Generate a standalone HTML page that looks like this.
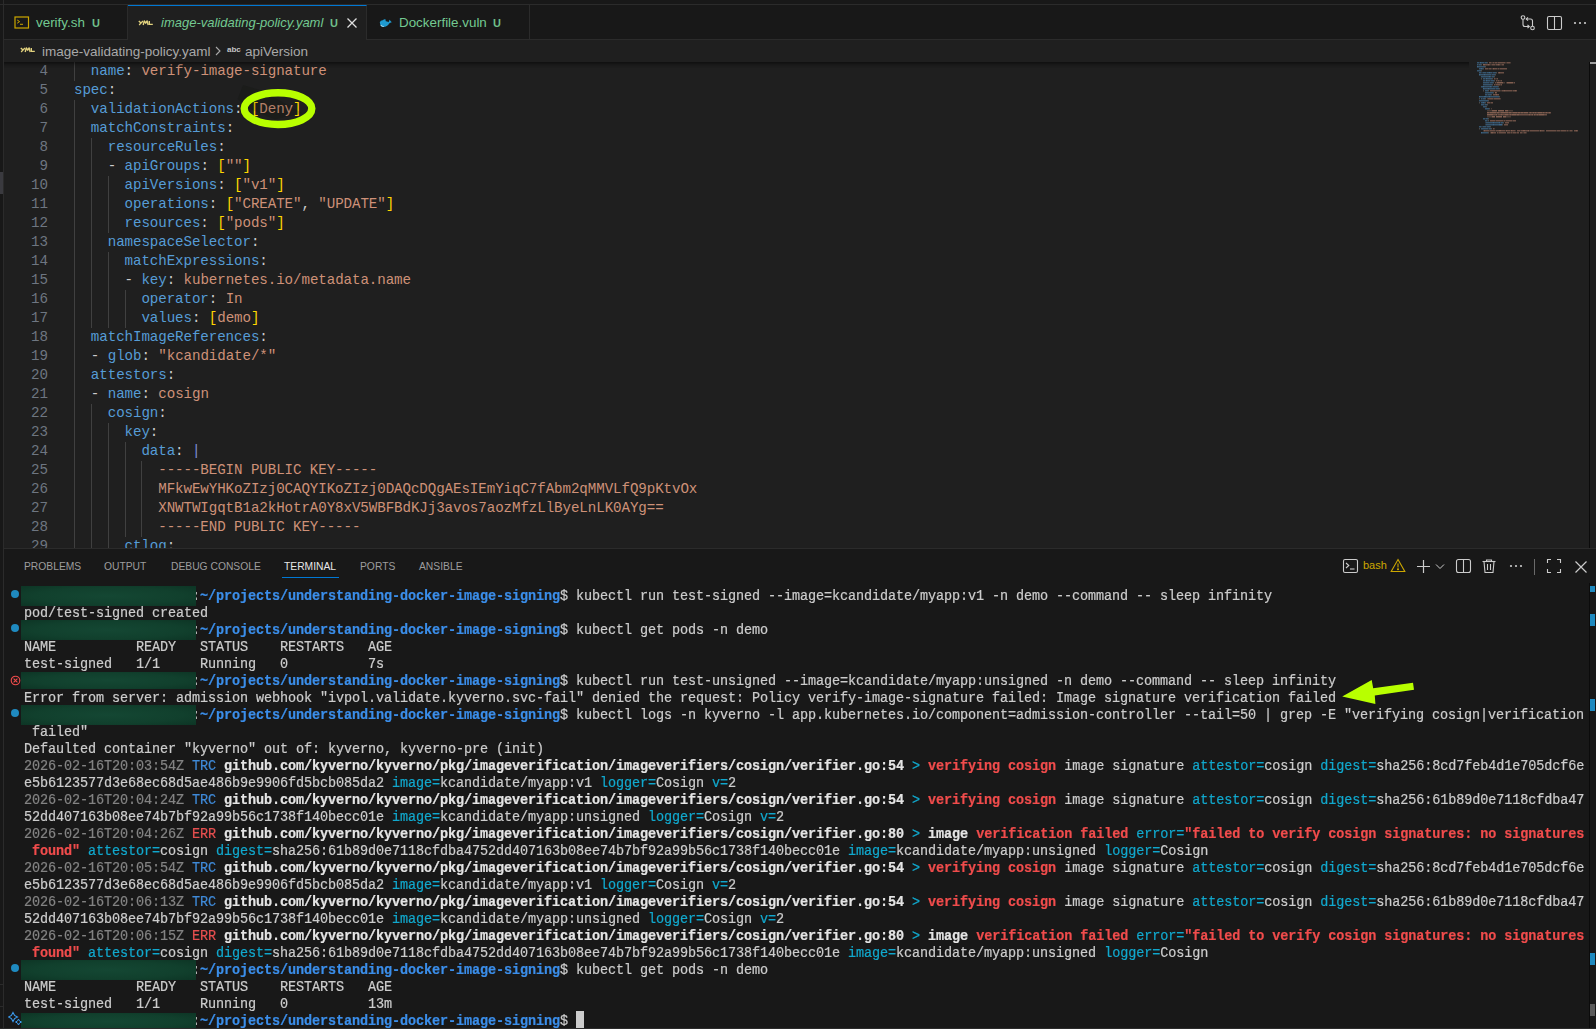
<!DOCTYPE html>
<html><head><meta charset="utf-8">
<style>
*{margin:0;padding:0;box-sizing:border-box}
html,body{width:1596px;height:1029px;overflow:hidden;background:#181818}
body{position:relative;font-family:"Liberation Sans",sans-serif}
.abs{position:absolute}
/* chrome */
#leftstrip{position:absolute;left:0;top:0;width:3px;height:1029px;background:#181818}
#leftborder{position:absolute;left:3px;top:0;width:1px;height:1029px;background:#2b2b2b}
#topline{position:absolute;left:0;top:4px;width:1596px;height:1px;background:#2b2b2b}
#tabbar{position:absolute;left:4px;top:5px;width:1592px;height:35px;background:#181818}
.tab{position:absolute;top:5px;height:35px;background:#181818;border-right:1px solid #2b2b2b;border-bottom:1px solid #2b2b2b}
.tab.active{background:#1f1f1f;border-bottom:none;border-top:1px solid #0078d4}
.tabfill{position:absolute;top:39px;height:1px;background:#2b2b2b}
.ub{font-size:11px!important;font-weight:bold;color:#6fbf8a!important;line-height:36px!important}
.tlabel{position:absolute;top:0;line-height:35px;font-size:13.4px;color:#73c991;white-space:pre}
#bread{position:absolute;left:4px;top:40px;width:1592px;height:22px;background:#1f1f1f}
.btxt{position:absolute;top:41px;line-height:22px;font-size:13.5px;color:#a9a9a9;white-space:pre}
#editor{position:absolute;left:4px;top:62px;width:1592px;height:486px;background:#1f1f1f;overflow:hidden}
#shadow{position:absolute;left:4px;top:62px;width:1465px;height:6px;box-shadow:#000 0 6px 6px -6px inset}
.ln{position:absolute;left:4px;width:44px;text-align:right;height:19px;line-height:19px;font-family:"Liberation Mono",monospace;font-size:14.2px;letter-spacing:0px;color:#6e7681;white-space:pre}
.cl{position:absolute;left:74px;height:19px;line-height:19px;font-family:"Liberation Mono",monospace;font-size:14.2px;letter-spacing:-0.0914px;color:#cccccc;white-space:pre}
.ig{position:absolute;width:1px;background:#404040}
.k{color:#569cd6}.s{color:#ce9178}.p{color:#cccccc}.b{color:#ffd700}.m{color:#7f8fd8}
#ovborder{position:absolute;left:1589px;top:62px;width:1px;height:486px;background:#0b0b0b}
#ovcursor{position:absolute;left:1590px;top:62px;width:6px;height:2px;background:#a0a0a0}
#edgebottom{position:absolute;left:4px;top:548px;width:1592px;height:1px;background:#2b2b2b}
#panel{position:absolute;left:4px;top:549px;width:1592px;height:480px;background:#181818}
.ptab{position:absolute;top:560px;line-height:14px;font-size:10.3px;color:#9d9d9d;white-space:pre}
.ptab.act{color:#e7e7e7}
#ptabline{position:absolute;left:282px;top:577px;width:57px;height:1px;background:#0078d4}
.tl{position:absolute;left:24px;height:17px;line-height:17px;transform:scaleY(1.11);transform-origin:0 3px;-webkit-text-stroke:0.2px currentColor;font-family:"Liberation Mono",monospace;font-size:13.5px;letter-spacing:-0.1013px;color:#cccccc;white-space:pre}
.w{color:#cccccc}.pb{color:#3b8eea;font-weight:bold}.g{color:#838383}.tb{color:#3f8ad8}.tr{color:#e64f4f}
.bw{color:#e5e5e5;font-weight:bold}.c{color:#11a8cd}.br{color:#f14c4c;font-weight:bold}
.cur{background:#cccccc}
.gbox{position:absolute;left:21px;width:175px;height:20px;background:radial-gradient(ellipse at 50% 50%,#144733 0%,#11402d 60%,#0d3525 100%);filter:blur(0.7px)}
.dot{position:absolute;left:11px;width:8px;height:8px;border-radius:50%;background:#1f8ac0}
.tmark{position:absolute;left:1590px;width:5px;background:#1f8ac0}
#tborder{position:absolute;left:1589px;top:583px;width:1px;height:446px;background:#0b0b0b}
svg.ic{position:absolute}
</style></head><body>
<div id="leftstrip"></div>
<div class="abs" style="left:0;top:172px;width:3px;height:22px;background:#3a3a3f"></div>
<div class="abs" style="left:0;top:984px;width:3px;height:1px;background:#2b2b2b"></div>
<div class="abs" style="left:0;top:1006px;width:3px;height:1px;background:#2b2b2b"></div>
<div id="leftborder"></div>
<div id="topline"></div>
<div id="tabbar"></div>
<div class="tab" style="left:4px;width:124px"></div>
<div class="tab active" style="left:128px;width:239px"></div>
<div class="tab" style="left:367px;width:163px"></div>
<div class="tabfill" style="left:530px;width:1066px"></div>
<!-- tab 1 icon: terminal -->
<svg class="ic" style="left:14px;top:16px" width="16" height="14" viewBox="0 0 16 14"><rect x="1" y="1" width="13.5" height="11" fill="none" stroke="#cca700" stroke-width="1.2"/><path d="M3.2 4 L5.6 5.6 L3.2 7.2" fill="none" stroke="#cca700" stroke-width="1"/><path d="M6 8.3 H9" stroke="#cca700" stroke-width="1"/></svg>
<div class="tlabel" style="left:36px;top:5px">verify.sh</div><div class="tlabel ub" style="left:92px;top:5px">U</div>
<!-- tab 2 icon: yaml -->
<svg class="ic" style="left:138px;top:20px" width="16" height="6" viewBox="0 0 16 6" fill="none" stroke="#e2d27e" stroke-width="1.4" stroke-linejoin="round"><path d="M0.8 0.9 L3 2.9 L5 0.9 M3 2.9 L1.2 5"/><path d="M5.2 5 L6.3 0.9 L7.7 3.2 L9.1 0.9 L10.2 5"/><path d="M11.3 0.9 V4.4 H14.8"/></svg>
<div class="tlabel" style="left:161px;top:5px;font-size:13px"><i>image-validating-policy.yaml</i></div><div class="tlabel ub" style="left:330px;top:5px">U</div>
<svg class="ic" style="left:346px;top:17px" width="12" height="12" viewBox="0 0 12 12"><path d="M1.5 1.5 L10.5 10.5 M10.5 1.5 L1.5 10.5" stroke="#e0e0e0" stroke-width="1.3"/></svg>
<!-- tab 3 icon: docker -->
<svg class="ic" style="left:379px;top:18px" width="14" height="10" viewBox="0 0 14 10"><path d="M0.8 4.2 C1.5 3 2.5 2.2 3.8 2.3 C4.5 1.5 5.5 1.2 6.3 1 L6.8 3.3 C7.8 3.4 8.6 3.8 9.6 4.3 C10 3.2 10.2 2.3 10.6 1.8 C11.3 2.5 11.8 3.3 12.8 4.2 C11.6 4.6 10.8 5 10.2 5.6 C9 7.8 6.8 9 4.5 9 C2.3 9 1 7.3 0.8 4.2 Z" fill="#1f9ad0"/><path d="M1.8 7 C2.6 8.2 3.6 8.6 4.8 8.5" stroke="#a8d8ee" stroke-width="1.2" fill="none"/></svg>
<div class="tlabel" style="left:399px;top:5px">Dockerfile.vuln</div><div class="tlabel ub" style="left:493px;top:5px">U</div>
<!-- top-right icons -->
<svg class="ic" style="left:1519px;top:14px" width="18" height="18" viewBox="0 0 18 18" fill="none" stroke="#cccccc" stroke-width="1.1"><circle cx="4" cy="3.5" r="1.8"/><circle cx="13.5" cy="14" r="1.8"/><path d="M4 5.3 V10.5 Q4 12.5 6 12.5 H10"/><path d="M8.5 10.8 L10.3 12.5 L8.5 14.2"/><path d="M13.5 12.2 V7 Q13.5 5 11.5 5 H7.5"/><path d="M9 3.3 L7.2 5 L9 6.7"/></svg>
<svg class="ic" style="left:1546px;top:15px" width="17" height="16" viewBox="0 0 17 16" fill="none" stroke="#cccccc" stroke-width="1.1"><rect x="1.5" y="1.5" width="14" height="13" rx="1.5"/><path d="M8.5 1.5 V14.5"/></svg>
<svg class="ic" style="left:1573px;top:21px" width="14" height="4" viewBox="0 0 14 4" fill="#cccccc"><circle cx="2" cy="2" r="1.1"/><circle cx="7" cy="2" r="1.1"/><circle cx="12" cy="2" r="1.1"/></svg>
<!-- breadcrumbs -->
<div id="bread"></div>
<svg class="ic" style="left:20px;top:47px" width="16" height="6" viewBox="0 0 16 6" fill="none" stroke="#e2d27e" stroke-width="1.4" stroke-linejoin="round"><path d="M0.8 0.9 L3 2.9 L5 0.9 M3 2.9 L1.2 5"/><path d="M5.2 5 L6.3 0.9 L7.7 3.2 L9.1 0.9 L10.2 5"/><path d="M11.3 0.9 V4.4 H14.8"/></svg>
<div class="btxt" style="left:42px">image-validating-policy.yaml</div>
<svg class="ic" style="left:213px;top:45px" width="10" height="12" viewBox="0 0 10 12"><path d="M3 2 L7 6 L3 10" fill="none" stroke="#a9a9a9" stroke-width="1.1"/></svg>
<div class="btxt" style="left:227px;font-size:8px;top:39px;font-weight:bold;color:#c5c5c5">abc</div>
<div class="btxt" style="left:245px">apiVersion</div>
<!-- editor -->
<div id="editor"></div>
<div class="ln" style="top:62px">4</div>
<div class="cl" style="top:62px">  <span class="k">name</span><span class="p">: </span><span class="s">verify-image-signature</span></div>
<div class="ln" style="top:81px">5</div>
<div class="cl" style="top:81px"><span class="k">spec</span><span class="p">:</span></div>
<div class="ln" style="top:100px">6</div>
<div class="cl" style="top:100px">  <span class="k">validationActions</span><span class="p">: </span><span class="b">[</span><span class="s">Deny</span><span class="b">]</span></div>
<div class="ln" style="top:119px">7</div>
<div class="cl" style="top:119px">  <span class="k">matchConstraints</span><span class="p">:</span></div>
<div class="ln" style="top:138px">8</div>
<div class="cl" style="top:138px">    <span class="k">resourceRules</span><span class="p">:</span></div>
<div class="ln" style="top:157px">9</div>
<div class="cl" style="top:157px">    <span class="p">- </span><span class="k">apiGroups</span><span class="p">: </span><span class="b">[</span><span class="s">""</span><span class="b">]</span></div>
<div class="ln" style="top:176px">10</div>
<div class="cl" style="top:176px">      <span class="k">apiVersions</span><span class="p">: </span><span class="b">[</span><span class="s">"v1"</span><span class="b">]</span></div>
<div class="ln" style="top:195px">11</div>
<div class="cl" style="top:195px">      <span class="k">operations</span><span class="p">: </span><span class="b">[</span><span class="s">"CREATE"</span><span class="p">, </span><span class="s">"UPDATE"</span><span class="b">]</span></div>
<div class="ln" style="top:214px">12</div>
<div class="cl" style="top:214px">      <span class="k">resources</span><span class="p">: </span><span class="b">[</span><span class="s">"pods"</span><span class="b">]</span></div>
<div class="ln" style="top:233px">13</div>
<div class="cl" style="top:233px">    <span class="k">namespaceSelector</span><span class="p">:</span></div>
<div class="ln" style="top:252px">14</div>
<div class="cl" style="top:252px">      <span class="k">matchExpressions</span><span class="p">:</span></div>
<div class="ln" style="top:271px">15</div>
<div class="cl" style="top:271px">      <span class="p">- </span><span class="k">key</span><span class="p">: </span><span class="s">kubernetes.io/metadata.name</span></div>
<div class="ln" style="top:290px">16</div>
<div class="cl" style="top:290px">        <span class="k">operator</span><span class="p">: </span><span class="s">In</span></div>
<div class="ln" style="top:309px">17</div>
<div class="cl" style="top:309px">        <span class="k">values</span><span class="p">: </span><span class="b">[</span><span class="s">demo</span><span class="b">]</span></div>
<div class="ln" style="top:328px">18</div>
<div class="cl" style="top:328px">  <span class="k">matchImageReferences</span><span class="p">:</span></div>
<div class="ln" style="top:347px">19</div>
<div class="cl" style="top:347px">  <span class="p">- </span><span class="k">glob</span><span class="p">: </span><span class="s">"kcandidate/*"</span></div>
<div class="ln" style="top:366px">20</div>
<div class="cl" style="top:366px">  <span class="k">attestors</span><span class="p">:</span></div>
<div class="ln" style="top:385px">21</div>
<div class="cl" style="top:385px">  <span class="p">- </span><span class="k">name</span><span class="p">: </span><span class="s">cosign</span></div>
<div class="ln" style="top:404px">22</div>
<div class="cl" style="top:404px">    <span class="k">cosign</span><span class="p">:</span></div>
<div class="ln" style="top:423px">23</div>
<div class="cl" style="top:423px">      <span class="k">key</span><span class="p">:</span></div>
<div class="ln" style="top:442px">24</div>
<div class="cl" style="top:442px">        <span class="k">data</span><span class="p">: </span><span class="m">|</span></div>
<div class="ln" style="top:461px">25</div>
<div class="cl" style="top:461px">          <span class="s">-----BEGIN PUBLIC KEY-----</span></div>
<div class="ln" style="top:480px">26</div>
<div class="cl" style="top:480px">          <span class="s">MFkwEwYHKoZIzj0CAQYIKoZIzj0DAQcDQgAEsIEmYiqC7fAbm2qMMVLfQ9pKtvOx</span></div>
<div class="ln" style="top:499px">27</div>
<div class="cl" style="top:499px">          <span class="s">XNWTWIgqtB1a2kHotrA0Y8xV5WBFBdKJj3avos7aozMfzLlByeLnLK0AYg==</span></div>
<div class="ln" style="top:518px">28</div>
<div class="cl" style="top:518px">          <span class="s">-----END PUBLIC KEY-----</span></div>
<div class="ln" style="top:537px">29</div>
<div class="cl" style="top:537px">      <span class="k">ctlog</span><span class="p">:</span></div>
<div class="ig" style="left:74px;top:62px;height:19px"></div>
<div class="ig" style="left:74px;top:100px;height:448px"></div>
<div class="ig" style="left:91px;top:138px;height:190px"></div>
<div class="ig" style="left:91px;top:404px;height:144px"></div>
<div class="ig" style="left:108px;top:176px;height:57px"></div>
<div class="ig" style="left:108px;top:252px;height:76px"></div>
<div class="ig" style="left:108px;top:423px;height:125px"></div>
<div class="ig" style="left:125px;top:290px;height:38px"></div>
<div class="ig" style="left:125px;top:442px;height:95px"></div>
<div class="ig" style="left:141px;top:461px;height:76px"></div>
<div id="shadow"></div>
<svg class="mm" width="1596" height="200" style="position:absolute;left:0;top:0" opacity="0.9"><rect x="1477" y="62" width="1" height="1.5" fill="#569cd6" fill-opacity="0.48"/><rect x="1478" y="62" width="1" height="1.5" fill="#569cd6" fill-opacity="0.48"/><rect x="1479" y="62" width="1" height="1.5" fill="#569cd6" fill-opacity="0.28"/><rect x="1480" y="62" width="1" height="1.5" fill="#569cd6" fill-opacity="0.62"/><rect x="1481" y="62" width="1" height="1.5" fill="#569cd6" fill-opacity="0.48"/><rect x="1482" y="62" width="1" height="1.5" fill="#569cd6" fill-opacity="0.48"/><rect x="1483" y="62" width="1" height="1.5" fill="#569cd6" fill-opacity="0.48"/><rect x="1484" y="62" width="1" height="1.5" fill="#569cd6" fill-opacity="0.28"/><rect x="1485" y="62" width="1" height="1.5" fill="#569cd6" fill-opacity="0.48"/><rect x="1486" y="62" width="1" height="1.5" fill="#569cd6" fill-opacity="0.48"/><rect x="1487" y="62" width="1" height="1.5" fill="#cccccc" fill-opacity="0.28"/><rect x="1489" y="62" width="1" height="1.5" fill="#ce9178" fill-opacity="0.48"/><rect x="1490" y="62" width="1" height="1.5" fill="#ce9178" fill-opacity="0.48"/><rect x="1491" y="62" width="1" height="1.5" fill="#ce9178" fill-opacity="0.28"/><rect x="1492" y="62" width="1" height="1.5" fill="#ce9178" fill-opacity="0.28"/><rect x="1493" y="62" width="1" height="1.5" fill="#ce9178" fill-opacity="0.48"/><rect x="1494" y="62" width="1" height="1.5" fill="#ce9178" fill-opacity="0.28"/><rect x="1495" y="62" width="1" height="1.5" fill="#ce9178" fill-opacity="0.48"/><rect x="1496" y="62" width="1" height="1.5" fill="#ce9178" fill-opacity="0.48"/><rect x="1497" y="62" width="1" height="1.5" fill="#ce9178" fill-opacity="0.28"/><rect x="1498" y="62" width="1" height="1.5" fill="#ce9178" fill-opacity="0.48"/><rect x="1499" y="62" width="1" height="1.5" fill="#ce9178" fill-opacity="0.48"/><rect x="1500" y="62" width="1" height="1.5" fill="#ce9178" fill-opacity="0.48"/><rect x="1501" y="62" width="1" height="1.5" fill="#ce9178" fill-opacity="0.48"/><rect x="1502" y="62" width="1" height="1.5" fill="#ce9178" fill-opacity="0.48"/><rect x="1503" y="62" width="1" height="1.5" fill="#ce9178" fill-opacity="0.48"/><rect x="1504" y="62" width="1" height="1.5" fill="#ce9178" fill-opacity="0.48"/><rect x="1505" y="62" width="1" height="1.5" fill="#ce9178" fill-opacity="0.28"/><rect x="1506" y="62" width="1" height="1.5" fill="#ce9178" fill-opacity="0.28"/><rect x="1507" y="62" width="1" height="1.5" fill="#ce9178" fill-opacity="0.48"/><rect x="1508" y="62" width="1" height="1.5" fill="#ce9178" fill-opacity="0.48"/><rect x="1509" y="62" width="1" height="1.5" fill="#ce9178" fill-opacity="0.48"/><rect x="1510" y="62" width="1" height="1.5" fill="#ce9178" fill-opacity="0.28"/><rect x="1477" y="64" width="1" height="1.5" fill="#569cd6" fill-opacity="0.48"/><rect x="1478" y="64" width="1" height="1.5" fill="#569cd6" fill-opacity="0.28"/><rect x="1479" y="64" width="1" height="1.5" fill="#569cd6" fill-opacity="0.48"/><rect x="1480" y="64" width="1" height="1.5" fill="#569cd6" fill-opacity="0.48"/><rect x="1481" y="64" width="1" height="1.5" fill="#cccccc" fill-opacity="0.28"/><rect x="1483" y="64" width="1" height="1.5" fill="#ce9178" fill-opacity="0.62"/><rect x="1484" y="64" width="1" height="1.5" fill="#ce9178" fill-opacity="0.62"/><rect x="1485" y="64" width="1" height="1.5" fill="#ce9178" fill-opacity="0.48"/><rect x="1486" y="64" width="1" height="1.5" fill="#ce9178" fill-opacity="0.48"/><rect x="1487" y="64" width="1" height="1.5" fill="#ce9178" fill-opacity="0.48"/><rect x="1488" y="64" width="1" height="1.5" fill="#ce9178" fill-opacity="0.62"/><rect x="1489" y="64" width="1" height="1.5" fill="#ce9178" fill-opacity="0.48"/><rect x="1490" y="64" width="1" height="1.5" fill="#ce9178" fill-opacity="0.28"/><rect x="1491" y="64" width="1" height="1.5" fill="#ce9178" fill-opacity="0.28"/><rect x="1492" y="64" width="1" height="1.5" fill="#ce9178" fill-opacity="0.48"/><rect x="1493" y="64" width="1" height="1.5" fill="#ce9178" fill-opacity="0.48"/><rect x="1494" y="64" width="1" height="1.5" fill="#ce9178" fill-opacity="0.48"/><rect x="1495" y="64" width="1" height="1.5" fill="#ce9178" fill-opacity="0.28"/><rect x="1496" y="64" width="1" height="1.5" fill="#ce9178" fill-opacity="0.48"/><rect x="1497" y="64" width="1" height="1.5" fill="#ce9178" fill-opacity="0.48"/><rect x="1498" y="64" width="1" height="1.5" fill="#ce9178" fill-opacity="0.62"/><rect x="1499" y="64" width="1" height="1.5" fill="#ce9178" fill-opacity="0.48"/><rect x="1500" y="64" width="1" height="1.5" fill="#ce9178" fill-opacity="0.28"/><rect x="1501" y="64" width="1" height="1.5" fill="#ce9178" fill-opacity="0.28"/><rect x="1502" y="64" width="1" height="1.5" fill="#ce9178" fill-opacity="0.48"/><rect x="1503" y="64" width="1" height="1.5" fill="#ce9178" fill-opacity="0.48"/><rect x="1477" y="66" width="1" height="1.5" fill="#569cd6" fill-opacity="0.62"/><rect x="1478" y="66" width="1" height="1.5" fill="#569cd6" fill-opacity="0.48"/><rect x="1479" y="66" width="1" height="1.5" fill="#569cd6" fill-opacity="0.48"/><rect x="1480" y="66" width="1" height="1.5" fill="#569cd6" fill-opacity="0.48"/><rect x="1481" y="66" width="1" height="1.5" fill="#569cd6" fill-opacity="0.48"/><rect x="1482" y="66" width="1" height="1.5" fill="#569cd6" fill-opacity="0.48"/><rect x="1483" y="66" width="1" height="1.5" fill="#569cd6" fill-opacity="0.48"/><rect x="1484" y="66" width="1" height="1.5" fill="#569cd6" fill-opacity="0.48"/><rect x="1485" y="66" width="1" height="1.5" fill="#cccccc" fill-opacity="0.28"/><rect x="1479" y="68" width="1" height="1.5" fill="#569cd6" fill-opacity="0.48"/><rect x="1480" y="68" width="1" height="1.5" fill="#569cd6" fill-opacity="0.48"/><rect x="1481" y="68" width="1" height="1.5" fill="#569cd6" fill-opacity="0.62"/><rect x="1482" y="68" width="1" height="1.5" fill="#569cd6" fill-opacity="0.48"/><rect x="1483" y="68" width="1" height="1.5" fill="#cccccc" fill-opacity="0.28"/><rect x="1485" y="68" width="1" height="1.5" fill="#ce9178" fill-opacity="0.48"/><rect x="1486" y="68" width="1" height="1.5" fill="#ce9178" fill-opacity="0.48"/><rect x="1487" y="68" width="1" height="1.5" fill="#ce9178" fill-opacity="0.48"/><rect x="1488" y="68" width="1" height="1.5" fill="#ce9178" fill-opacity="0.28"/><rect x="1489" y="68" width="1" height="1.5" fill="#ce9178" fill-opacity="0.48"/><rect x="1490" y="68" width="1" height="1.5" fill="#ce9178" fill-opacity="0.48"/><rect x="1491" y="68" width="1" height="1.5" fill="#ce9178" fill-opacity="0.28"/><rect x="1492" y="68" width="1" height="1.5" fill="#ce9178" fill-opacity="0.28"/><rect x="1493" y="68" width="1" height="1.5" fill="#ce9178" fill-opacity="0.62"/><rect x="1494" y="68" width="1" height="1.5" fill="#ce9178" fill-opacity="0.48"/><rect x="1495" y="68" width="1" height="1.5" fill="#ce9178" fill-opacity="0.48"/><rect x="1496" y="68" width="1" height="1.5" fill="#ce9178" fill-opacity="0.48"/><rect x="1497" y="68" width="1" height="1.5" fill="#ce9178" fill-opacity="0.28"/><rect x="1498" y="68" width="1" height="1.5" fill="#ce9178" fill-opacity="0.48"/><rect x="1499" y="68" width="1" height="1.5" fill="#ce9178" fill-opacity="0.28"/><rect x="1500" y="68" width="1" height="1.5" fill="#ce9178" fill-opacity="0.48"/><rect x="1501" y="68" width="1" height="1.5" fill="#ce9178" fill-opacity="0.48"/><rect x="1502" y="68" width="1" height="1.5" fill="#ce9178" fill-opacity="0.48"/><rect x="1503" y="68" width="1" height="1.5" fill="#ce9178" fill-opacity="0.48"/><rect x="1504" y="68" width="1" height="1.5" fill="#ce9178" fill-opacity="0.48"/><rect x="1505" y="68" width="1" height="1.5" fill="#ce9178" fill-opacity="0.48"/><rect x="1506" y="68" width="1" height="1.5" fill="#ce9178" fill-opacity="0.48"/><rect x="1477" y="70" width="1" height="1.5" fill="#569cd6" fill-opacity="0.48"/><rect x="1478" y="70" width="1" height="1.5" fill="#569cd6" fill-opacity="0.48"/><rect x="1479" y="70" width="1" height="1.5" fill="#569cd6" fill-opacity="0.48"/><rect x="1480" y="70" width="1" height="1.5" fill="#569cd6" fill-opacity="0.48"/><rect x="1481" y="70" width="1" height="1.5" fill="#cccccc" fill-opacity="0.28"/><rect x="1479" y="72" width="1" height="1.5" fill="#569cd6" fill-opacity="0.48"/><rect x="1480" y="72" width="1" height="1.5" fill="#569cd6" fill-opacity="0.48"/><rect x="1481" y="72" width="1" height="1.5" fill="#569cd6" fill-opacity="0.28"/><rect x="1482" y="72" width="1" height="1.5" fill="#569cd6" fill-opacity="0.28"/><rect x="1483" y="72" width="1" height="1.5" fill="#569cd6" fill-opacity="0.48"/><rect x="1484" y="72" width="1" height="1.5" fill="#569cd6" fill-opacity="0.48"/><rect x="1485" y="72" width="1" height="1.5" fill="#569cd6" fill-opacity="0.48"/><rect x="1486" y="72" width="1" height="1.5" fill="#569cd6" fill-opacity="0.28"/><rect x="1487" y="72" width="1" height="1.5" fill="#569cd6" fill-opacity="0.48"/><rect x="1488" y="72" width="1" height="1.5" fill="#569cd6" fill-opacity="0.48"/><rect x="1489" y="72" width="1" height="1.5" fill="#569cd6" fill-opacity="0.62"/><rect x="1490" y="72" width="1" height="1.5" fill="#569cd6" fill-opacity="0.48"/><rect x="1491" y="72" width="1" height="1.5" fill="#569cd6" fill-opacity="0.48"/><rect x="1492" y="72" width="1" height="1.5" fill="#569cd6" fill-opacity="0.28"/><rect x="1493" y="72" width="1" height="1.5" fill="#569cd6" fill-opacity="0.48"/><rect x="1494" y="72" width="1" height="1.5" fill="#569cd6" fill-opacity="0.48"/><rect x="1495" y="72" width="1" height="1.5" fill="#569cd6" fill-opacity="0.48"/><rect x="1496" y="72" width="1" height="1.5" fill="#cccccc" fill-opacity="0.28"/><rect x="1498" y="72" width="1" height="1.5" fill="#ce9178" fill-opacity="0.48"/><rect x="1499" y="72" width="1" height="1.5" fill="#ce9178" fill-opacity="0.62"/><rect x="1500" y="72" width="1" height="1.5" fill="#ce9178" fill-opacity="0.48"/><rect x="1501" y="72" width="1" height="1.5" fill="#ce9178" fill-opacity="0.48"/><rect x="1502" y="72" width="1" height="1.5" fill="#ce9178" fill-opacity="0.48"/><rect x="1503" y="72" width="1" height="1.5" fill="#ce9178" fill-opacity="0.48"/><rect x="1479" y="74" width="1" height="1.5" fill="#569cd6" fill-opacity="0.62"/><rect x="1480" y="74" width="1" height="1.5" fill="#569cd6" fill-opacity="0.48"/><rect x="1481" y="74" width="1" height="1.5" fill="#569cd6" fill-opacity="0.48"/><rect x="1482" y="74" width="1" height="1.5" fill="#569cd6" fill-opacity="0.48"/><rect x="1483" y="74" width="1" height="1.5" fill="#569cd6" fill-opacity="0.48"/><rect x="1484" y="74" width="1" height="1.5" fill="#569cd6" fill-opacity="0.62"/><rect x="1485" y="74" width="1" height="1.5" fill="#569cd6" fill-opacity="0.48"/><rect x="1486" y="74" width="1" height="1.5" fill="#569cd6" fill-opacity="0.48"/><rect x="1487" y="74" width="1" height="1.5" fill="#569cd6" fill-opacity="0.48"/><rect x="1488" y="74" width="1" height="1.5" fill="#569cd6" fill-opacity="0.48"/><rect x="1489" y="74" width="1" height="1.5" fill="#569cd6" fill-opacity="0.48"/><rect x="1490" y="74" width="1" height="1.5" fill="#569cd6" fill-opacity="0.48"/><rect x="1491" y="74" width="1" height="1.5" fill="#569cd6" fill-opacity="0.28"/><rect x="1492" y="74" width="1" height="1.5" fill="#569cd6" fill-opacity="0.48"/><rect x="1493" y="74" width="1" height="1.5" fill="#569cd6" fill-opacity="0.48"/><rect x="1494" y="74" width="1" height="1.5" fill="#569cd6" fill-opacity="0.48"/><rect x="1495" y="74" width="1" height="1.5" fill="#cccccc" fill-opacity="0.28"/><rect x="1481" y="76" width="1" height="1.5" fill="#569cd6" fill-opacity="0.48"/><rect x="1482" y="76" width="1" height="1.5" fill="#569cd6" fill-opacity="0.48"/><rect x="1483" y="76" width="1" height="1.5" fill="#569cd6" fill-opacity="0.48"/><rect x="1484" y="76" width="1" height="1.5" fill="#569cd6" fill-opacity="0.48"/><rect x="1485" y="76" width="1" height="1.5" fill="#569cd6" fill-opacity="0.48"/><rect x="1486" y="76" width="1" height="1.5" fill="#569cd6" fill-opacity="0.48"/><rect x="1487" y="76" width="1" height="1.5" fill="#569cd6" fill-opacity="0.48"/><rect x="1488" y="76" width="1" height="1.5" fill="#569cd6" fill-opacity="0.48"/><rect x="1489" y="76" width="1" height="1.5" fill="#569cd6" fill-opacity="0.62"/><rect x="1490" y="76" width="1" height="1.5" fill="#569cd6" fill-opacity="0.48"/><rect x="1491" y="76" width="1" height="1.5" fill="#569cd6" fill-opacity="0.28"/><rect x="1492" y="76" width="1" height="1.5" fill="#569cd6" fill-opacity="0.48"/><rect x="1493" y="76" width="1" height="1.5" fill="#569cd6" fill-opacity="0.48"/><rect x="1494" y="76" width="1" height="1.5" fill="#cccccc" fill-opacity="0.28"/><rect x="1481" y="78" width="1" height="1.5" fill="#cccccc" fill-opacity="0.28"/><rect x="1483" y="78" width="1" height="1.5" fill="#569cd6" fill-opacity="0.48"/><rect x="1484" y="78" width="1" height="1.5" fill="#569cd6" fill-opacity="0.48"/><rect x="1485" y="78" width="1" height="1.5" fill="#569cd6" fill-opacity="0.28"/><rect x="1486" y="78" width="1" height="1.5" fill="#569cd6" fill-opacity="0.62"/><rect x="1487" y="78" width="1" height="1.5" fill="#569cd6" fill-opacity="0.48"/><rect x="1488" y="78" width="1" height="1.5" fill="#569cd6" fill-opacity="0.48"/><rect x="1489" y="78" width="1" height="1.5" fill="#569cd6" fill-opacity="0.48"/><rect x="1490" y="78" width="1" height="1.5" fill="#569cd6" fill-opacity="0.48"/><rect x="1491" y="78" width="1" height="1.5" fill="#569cd6" fill-opacity="0.48"/><rect x="1492" y="78" width="1" height="1.5" fill="#cccccc" fill-opacity="0.28"/><rect x="1494" y="78" width="1" height="1.5" fill="#ce9178" fill-opacity="0.48"/><rect x="1495" y="78" width="1" height="1.5" fill="#ce9178" fill-opacity="0.28"/><rect x="1496" y="78" width="1" height="1.5" fill="#ce9178" fill-opacity="0.28"/><rect x="1497" y="78" width="1" height="1.5" fill="#ce9178" fill-opacity="0.48"/><rect x="1483" y="80" width="1" height="1.5" fill="#569cd6" fill-opacity="0.48"/><rect x="1484" y="80" width="1" height="1.5" fill="#569cd6" fill-opacity="0.48"/><rect x="1485" y="80" width="1" height="1.5" fill="#569cd6" fill-opacity="0.28"/><rect x="1486" y="80" width="1" height="1.5" fill="#569cd6" fill-opacity="0.62"/><rect x="1487" y="80" width="1" height="1.5" fill="#569cd6" fill-opacity="0.48"/><rect x="1488" y="80" width="1" height="1.5" fill="#569cd6" fill-opacity="0.48"/><rect x="1489" y="80" width="1" height="1.5" fill="#569cd6" fill-opacity="0.48"/><rect x="1490" y="80" width="1" height="1.5" fill="#569cd6" fill-opacity="0.28"/><rect x="1491" y="80" width="1" height="1.5" fill="#569cd6" fill-opacity="0.48"/><rect x="1492" y="80" width="1" height="1.5" fill="#569cd6" fill-opacity="0.48"/><rect x="1493" y="80" width="1" height="1.5" fill="#569cd6" fill-opacity="0.48"/><rect x="1494" y="80" width="1" height="1.5" fill="#cccccc" fill-opacity="0.28"/><rect x="1496" y="80" width="1" height="1.5" fill="#ce9178" fill-opacity="0.48"/><rect x="1497" y="80" width="1" height="1.5" fill="#ce9178" fill-opacity="0.28"/><rect x="1498" y="80" width="1" height="1.5" fill="#ce9178" fill-opacity="0.48"/><rect x="1499" y="80" width="1" height="1.5" fill="#ce9178" fill-opacity="0.28"/><rect x="1500" y="80" width="1" height="1.5" fill="#ce9178" fill-opacity="0.28"/><rect x="1501" y="80" width="1" height="1.5" fill="#ce9178" fill-opacity="0.48"/><rect x="1483" y="82" width="1" height="1.5" fill="#569cd6" fill-opacity="0.48"/><rect x="1484" y="82" width="1" height="1.5" fill="#569cd6" fill-opacity="0.48"/><rect x="1485" y="82" width="1" height="1.5" fill="#569cd6" fill-opacity="0.48"/><rect x="1486" y="82" width="1" height="1.5" fill="#569cd6" fill-opacity="0.48"/><rect x="1487" y="82" width="1" height="1.5" fill="#569cd6" fill-opacity="0.48"/><rect x="1488" y="82" width="1" height="1.5" fill="#569cd6" fill-opacity="0.48"/><rect x="1489" y="82" width="1" height="1.5" fill="#569cd6" fill-opacity="0.28"/><rect x="1490" y="82" width="1" height="1.5" fill="#569cd6" fill-opacity="0.48"/><rect x="1491" y="82" width="1" height="1.5" fill="#569cd6" fill-opacity="0.48"/><rect x="1492" y="82" width="1" height="1.5" fill="#569cd6" fill-opacity="0.48"/><rect x="1493" y="82" width="1" height="1.5" fill="#cccccc" fill-opacity="0.28"/><rect x="1495" y="82" width="1" height="1.5" fill="#ce9178" fill-opacity="0.48"/><rect x="1496" y="82" width="1" height="1.5" fill="#ce9178" fill-opacity="0.28"/><rect x="1497" y="82" width="1" height="1.5" fill="#ce9178" fill-opacity="0.62"/><rect x="1498" y="82" width="1" height="1.5" fill="#ce9178" fill-opacity="0.62"/><rect x="1499" y="82" width="1" height="1.5" fill="#ce9178" fill-opacity="0.62"/><rect x="1500" y="82" width="1" height="1.5" fill="#ce9178" fill-opacity="0.62"/><rect x="1501" y="82" width="1" height="1.5" fill="#ce9178" fill-opacity="0.62"/><rect x="1502" y="82" width="1" height="1.5" fill="#ce9178" fill-opacity="0.62"/><rect x="1503" y="82" width="1" height="1.5" fill="#ce9178" fill-opacity="0.28"/><rect x="1504" y="82" width="1" height="1.5" fill="#ce9178" fill-opacity="0.28"/><rect x="1506" y="82" width="1" height="1.5" fill="#ce9178" fill-opacity="0.28"/><rect x="1507" y="82" width="1" height="1.5" fill="#ce9178" fill-opacity="0.62"/><rect x="1508" y="82" width="1" height="1.5" fill="#ce9178" fill-opacity="0.62"/><rect x="1509" y="82" width="1" height="1.5" fill="#ce9178" fill-opacity="0.62"/><rect x="1510" y="82" width="1" height="1.5" fill="#ce9178" fill-opacity="0.62"/><rect x="1511" y="82" width="1" height="1.5" fill="#ce9178" fill-opacity="0.62"/><rect x="1512" y="82" width="1" height="1.5" fill="#ce9178" fill-opacity="0.62"/><rect x="1513" y="82" width="1" height="1.5" fill="#ce9178" fill-opacity="0.28"/><rect x="1514" y="82" width="1" height="1.5" fill="#ce9178" fill-opacity="0.48"/><rect x="1483" y="84" width="1" height="1.5" fill="#569cd6" fill-opacity="0.48"/><rect x="1484" y="84" width="1" height="1.5" fill="#569cd6" fill-opacity="0.48"/><rect x="1485" y="84" width="1" height="1.5" fill="#569cd6" fill-opacity="0.48"/><rect x="1486" y="84" width="1" height="1.5" fill="#569cd6" fill-opacity="0.48"/><rect x="1487" y="84" width="1" height="1.5" fill="#569cd6" fill-opacity="0.48"/><rect x="1488" y="84" width="1" height="1.5" fill="#569cd6" fill-opacity="0.48"/><rect x="1489" y="84" width="1" height="1.5" fill="#569cd6" fill-opacity="0.48"/><rect x="1490" y="84" width="1" height="1.5" fill="#569cd6" fill-opacity="0.48"/><rect x="1491" y="84" width="1" height="1.5" fill="#569cd6" fill-opacity="0.48"/><rect x="1492" y="84" width="1" height="1.5" fill="#cccccc" fill-opacity="0.28"/><rect x="1494" y="84" width="1" height="1.5" fill="#ce9178" fill-opacity="0.48"/><rect x="1495" y="84" width="1" height="1.5" fill="#ce9178" fill-opacity="0.28"/><rect x="1496" y="84" width="1" height="1.5" fill="#ce9178" fill-opacity="0.48"/><rect x="1497" y="84" width="1" height="1.5" fill="#ce9178" fill-opacity="0.48"/><rect x="1498" y="84" width="1" height="1.5" fill="#ce9178" fill-opacity="0.48"/><rect x="1499" y="84" width="1" height="1.5" fill="#ce9178" fill-opacity="0.48"/><rect x="1500" y="84" width="1" height="1.5" fill="#ce9178" fill-opacity="0.28"/><rect x="1501" y="84" width="1" height="1.5" fill="#ce9178" fill-opacity="0.48"/><rect x="1481" y="86" width="1" height="1.5" fill="#569cd6" fill-opacity="0.48"/><rect x="1482" y="86" width="1" height="1.5" fill="#569cd6" fill-opacity="0.48"/><rect x="1483" y="86" width="1" height="1.5" fill="#569cd6" fill-opacity="0.62"/><rect x="1484" y="86" width="1" height="1.5" fill="#569cd6" fill-opacity="0.48"/><rect x="1485" y="86" width="1" height="1.5" fill="#569cd6" fill-opacity="0.48"/><rect x="1486" y="86" width="1" height="1.5" fill="#569cd6" fill-opacity="0.48"/><rect x="1487" y="86" width="1" height="1.5" fill="#569cd6" fill-opacity="0.48"/><rect x="1488" y="86" width="1" height="1.5" fill="#569cd6" fill-opacity="0.48"/><rect x="1489" y="86" width="1" height="1.5" fill="#569cd6" fill-opacity="0.48"/><rect x="1490" y="86" width="1" height="1.5" fill="#569cd6" fill-opacity="0.62"/><rect x="1491" y="86" width="1" height="1.5" fill="#569cd6" fill-opacity="0.48"/><rect x="1492" y="86" width="1" height="1.5" fill="#569cd6" fill-opacity="0.28"/><rect x="1493" y="86" width="1" height="1.5" fill="#569cd6" fill-opacity="0.48"/><rect x="1494" y="86" width="1" height="1.5" fill="#569cd6" fill-opacity="0.48"/><rect x="1495" y="86" width="1" height="1.5" fill="#569cd6" fill-opacity="0.48"/><rect x="1496" y="86" width="1" height="1.5" fill="#569cd6" fill-opacity="0.48"/><rect x="1497" y="86" width="1" height="1.5" fill="#569cd6" fill-opacity="0.48"/><rect x="1498" y="86" width="1" height="1.5" fill="#cccccc" fill-opacity="0.28"/><rect x="1483" y="88" width="1" height="1.5" fill="#569cd6" fill-opacity="0.62"/><rect x="1484" y="88" width="1" height="1.5" fill="#569cd6" fill-opacity="0.48"/><rect x="1485" y="88" width="1" height="1.5" fill="#569cd6" fill-opacity="0.48"/><rect x="1486" y="88" width="1" height="1.5" fill="#569cd6" fill-opacity="0.48"/><rect x="1487" y="88" width="1" height="1.5" fill="#569cd6" fill-opacity="0.48"/><rect x="1488" y="88" width="1" height="1.5" fill="#569cd6" fill-opacity="0.62"/><rect x="1489" y="88" width="1" height="1.5" fill="#569cd6" fill-opacity="0.48"/><rect x="1490" y="88" width="1" height="1.5" fill="#569cd6" fill-opacity="0.48"/><rect x="1491" y="88" width="1" height="1.5" fill="#569cd6" fill-opacity="0.48"/><rect x="1492" y="88" width="1" height="1.5" fill="#569cd6" fill-opacity="0.48"/><rect x="1493" y="88" width="1" height="1.5" fill="#569cd6" fill-opacity="0.48"/><rect x="1494" y="88" width="1" height="1.5" fill="#569cd6" fill-opacity="0.48"/><rect x="1495" y="88" width="1" height="1.5" fill="#569cd6" fill-opacity="0.28"/><rect x="1496" y="88" width="1" height="1.5" fill="#569cd6" fill-opacity="0.48"/><rect x="1497" y="88" width="1" height="1.5" fill="#569cd6" fill-opacity="0.48"/><rect x="1498" y="88" width="1" height="1.5" fill="#569cd6" fill-opacity="0.48"/><rect x="1499" y="88" width="1" height="1.5" fill="#cccccc" fill-opacity="0.28"/><rect x="1483" y="90" width="1" height="1.5" fill="#cccccc" fill-opacity="0.28"/><rect x="1485" y="90" width="1" height="1.5" fill="#569cd6" fill-opacity="0.48"/><rect x="1486" y="90" width="1" height="1.5" fill="#569cd6" fill-opacity="0.48"/><rect x="1487" y="90" width="1" height="1.5" fill="#569cd6" fill-opacity="0.48"/><rect x="1488" y="90" width="1" height="1.5" fill="#cccccc" fill-opacity="0.28"/><rect x="1490" y="90" width="1" height="1.5" fill="#ce9178" fill-opacity="0.48"/><rect x="1491" y="90" width="1" height="1.5" fill="#ce9178" fill-opacity="0.48"/><rect x="1492" y="90" width="1" height="1.5" fill="#ce9178" fill-opacity="0.48"/><rect x="1493" y="90" width="1" height="1.5" fill="#ce9178" fill-opacity="0.48"/><rect x="1494" y="90" width="1" height="1.5" fill="#ce9178" fill-opacity="0.48"/><rect x="1495" y="90" width="1" height="1.5" fill="#ce9178" fill-opacity="0.48"/><rect x="1496" y="90" width="1" height="1.5" fill="#ce9178" fill-opacity="0.48"/><rect x="1497" y="90" width="1" height="1.5" fill="#ce9178" fill-opacity="0.48"/><rect x="1498" y="90" width="1" height="1.5" fill="#ce9178" fill-opacity="0.48"/><rect x="1499" y="90" width="1" height="1.5" fill="#ce9178" fill-opacity="0.48"/><rect x="1500" y="90" width="1" height="1.5" fill="#ce9178" fill-opacity="0.28"/><rect x="1501" y="90" width="1" height="1.5" fill="#ce9178" fill-opacity="0.28"/><rect x="1502" y="90" width="1" height="1.5" fill="#ce9178" fill-opacity="0.48"/><rect x="1503" y="90" width="1" height="1.5" fill="#ce9178" fill-opacity="0.48"/><rect x="1504" y="90" width="1" height="1.5" fill="#ce9178" fill-opacity="0.62"/><rect x="1505" y="90" width="1" height="1.5" fill="#ce9178" fill-opacity="0.48"/><rect x="1506" y="90" width="1" height="1.5" fill="#ce9178" fill-opacity="0.48"/><rect x="1507" y="90" width="1" height="1.5" fill="#ce9178" fill-opacity="0.48"/><rect x="1508" y="90" width="1" height="1.5" fill="#ce9178" fill-opacity="0.48"/><rect x="1509" y="90" width="1" height="1.5" fill="#ce9178" fill-opacity="0.48"/><rect x="1510" y="90" width="1" height="1.5" fill="#ce9178" fill-opacity="0.48"/><rect x="1511" y="90" width="1" height="1.5" fill="#ce9178" fill-opacity="0.48"/><rect x="1512" y="90" width="1" height="1.5" fill="#ce9178" fill-opacity="0.28"/><rect x="1513" y="90" width="1" height="1.5" fill="#ce9178" fill-opacity="0.48"/><rect x="1514" y="90" width="1" height="1.5" fill="#ce9178" fill-opacity="0.48"/><rect x="1515" y="90" width="1" height="1.5" fill="#ce9178" fill-opacity="0.62"/><rect x="1516" y="90" width="1" height="1.5" fill="#ce9178" fill-opacity="0.48"/><rect x="1485" y="92" width="1" height="1.5" fill="#569cd6" fill-opacity="0.48"/><rect x="1486" y="92" width="1" height="1.5" fill="#569cd6" fill-opacity="0.48"/><rect x="1487" y="92" width="1" height="1.5" fill="#569cd6" fill-opacity="0.48"/><rect x="1488" y="92" width="1" height="1.5" fill="#569cd6" fill-opacity="0.48"/><rect x="1489" y="92" width="1" height="1.5" fill="#569cd6" fill-opacity="0.48"/><rect x="1490" y="92" width="1" height="1.5" fill="#569cd6" fill-opacity="0.48"/><rect x="1491" y="92" width="1" height="1.5" fill="#569cd6" fill-opacity="0.48"/><rect x="1492" y="92" width="1" height="1.5" fill="#569cd6" fill-opacity="0.48"/><rect x="1493" y="92" width="1" height="1.5" fill="#cccccc" fill-opacity="0.28"/><rect x="1495" y="92" width="1" height="1.5" fill="#ce9178" fill-opacity="0.62"/><rect x="1496" y="92" width="1" height="1.5" fill="#ce9178" fill-opacity="0.48"/><rect x="1485" y="94" width="1" height="1.5" fill="#569cd6" fill-opacity="0.48"/><rect x="1486" y="94" width="1" height="1.5" fill="#569cd6" fill-opacity="0.48"/><rect x="1487" y="94" width="1" height="1.5" fill="#569cd6" fill-opacity="0.28"/><rect x="1488" y="94" width="1" height="1.5" fill="#569cd6" fill-opacity="0.48"/><rect x="1489" y="94" width="1" height="1.5" fill="#569cd6" fill-opacity="0.48"/><rect x="1490" y="94" width="1" height="1.5" fill="#569cd6" fill-opacity="0.48"/><rect x="1491" y="94" width="1" height="1.5" fill="#cccccc" fill-opacity="0.28"/><rect x="1493" y="94" width="1" height="1.5" fill="#ce9178" fill-opacity="0.48"/><rect x="1494" y="94" width="1" height="1.5" fill="#ce9178" fill-opacity="0.48"/><rect x="1495" y="94" width="1" height="1.5" fill="#ce9178" fill-opacity="0.48"/><rect x="1496" y="94" width="1" height="1.5" fill="#ce9178" fill-opacity="0.62"/><rect x="1497" y="94" width="1" height="1.5" fill="#ce9178" fill-opacity="0.48"/><rect x="1498" y="94" width="1" height="1.5" fill="#ce9178" fill-opacity="0.48"/><rect x="1479" y="96" width="1" height="1.5" fill="#569cd6" fill-opacity="0.62"/><rect x="1480" y="96" width="1" height="1.5" fill="#569cd6" fill-opacity="0.48"/><rect x="1481" y="96" width="1" height="1.5" fill="#569cd6" fill-opacity="0.48"/><rect x="1482" y="96" width="1" height="1.5" fill="#569cd6" fill-opacity="0.48"/><rect x="1483" y="96" width="1" height="1.5" fill="#569cd6" fill-opacity="0.48"/><rect x="1484" y="96" width="1" height="1.5" fill="#569cd6" fill-opacity="0.62"/><rect x="1485" y="96" width="1" height="1.5" fill="#569cd6" fill-opacity="0.62"/><rect x="1486" y="96" width="1" height="1.5" fill="#569cd6" fill-opacity="0.48"/><rect x="1487" y="96" width="1" height="1.5" fill="#569cd6" fill-opacity="0.48"/><rect x="1488" y="96" width="1" height="1.5" fill="#569cd6" fill-opacity="0.48"/><rect x="1489" y="96" width="1" height="1.5" fill="#569cd6" fill-opacity="0.62"/><rect x="1490" y="96" width="1" height="1.5" fill="#569cd6" fill-opacity="0.48"/><rect x="1491" y="96" width="1" height="1.5" fill="#569cd6" fill-opacity="0.48"/><rect x="1492" y="96" width="1" height="1.5" fill="#569cd6" fill-opacity="0.48"/><rect x="1493" y="96" width="1" height="1.5" fill="#569cd6" fill-opacity="0.48"/><rect x="1494" y="96" width="1" height="1.5" fill="#569cd6" fill-opacity="0.48"/><rect x="1495" y="96" width="1" height="1.5" fill="#569cd6" fill-opacity="0.48"/><rect x="1496" y="96" width="1" height="1.5" fill="#569cd6" fill-opacity="0.48"/><rect x="1497" y="96" width="1" height="1.5" fill="#569cd6" fill-opacity="0.48"/><rect x="1498" y="96" width="1" height="1.5" fill="#569cd6" fill-opacity="0.48"/><rect x="1499" y="96" width="1" height="1.5" fill="#cccccc" fill-opacity="0.28"/><rect x="1479" y="98" width="1" height="1.5" fill="#cccccc" fill-opacity="0.28"/><rect x="1481" y="98" width="1" height="1.5" fill="#569cd6" fill-opacity="0.48"/><rect x="1482" y="98" width="1" height="1.5" fill="#569cd6" fill-opacity="0.28"/><rect x="1483" y="98" width="1" height="1.5" fill="#569cd6" fill-opacity="0.48"/><rect x="1484" y="98" width="1" height="1.5" fill="#569cd6" fill-opacity="0.48"/><rect x="1485" y="98" width="1" height="1.5" fill="#cccccc" fill-opacity="0.28"/><rect x="1487" y="98" width="1" height="1.5" fill="#ce9178" fill-opacity="0.28"/><rect x="1488" y="98" width="1" height="1.5" fill="#ce9178" fill-opacity="0.48"/><rect x="1489" y="98" width="1" height="1.5" fill="#ce9178" fill-opacity="0.48"/><rect x="1490" y="98" width="1" height="1.5" fill="#ce9178" fill-opacity="0.48"/><rect x="1491" y="98" width="1" height="1.5" fill="#ce9178" fill-opacity="0.48"/><rect x="1492" y="98" width="1" height="1.5" fill="#ce9178" fill-opacity="0.48"/><rect x="1493" y="98" width="1" height="1.5" fill="#ce9178" fill-opacity="0.28"/><rect x="1494" y="98" width="1" height="1.5" fill="#ce9178" fill-opacity="0.48"/><rect x="1495" y="98" width="1" height="1.5" fill="#ce9178" fill-opacity="0.48"/><rect x="1496" y="98" width="1" height="1.5" fill="#ce9178" fill-opacity="0.48"/><rect x="1497" y="98" width="1" height="1.5" fill="#ce9178" fill-opacity="0.48"/><rect x="1498" y="98" width="1" height="1.5" fill="#ce9178" fill-opacity="0.48"/><rect x="1499" y="98" width="1" height="1.5" fill="#ce9178" fill-opacity="0.48"/><rect x="1500" y="98" width="1" height="1.5" fill="#ce9178" fill-opacity="0.28"/><rect x="1479" y="100" width="1" height="1.5" fill="#569cd6" fill-opacity="0.48"/><rect x="1480" y="100" width="1" height="1.5" fill="#569cd6" fill-opacity="0.48"/><rect x="1481" y="100" width="1" height="1.5" fill="#569cd6" fill-opacity="0.48"/><rect x="1482" y="100" width="1" height="1.5" fill="#569cd6" fill-opacity="0.48"/><rect x="1483" y="100" width="1" height="1.5" fill="#569cd6" fill-opacity="0.48"/><rect x="1484" y="100" width="1" height="1.5" fill="#569cd6" fill-opacity="0.48"/><rect x="1485" y="100" width="1" height="1.5" fill="#569cd6" fill-opacity="0.48"/><rect x="1486" y="100" width="1" height="1.5" fill="#569cd6" fill-opacity="0.48"/><rect x="1487" y="100" width="1" height="1.5" fill="#569cd6" fill-opacity="0.48"/><rect x="1488" y="100" width="1" height="1.5" fill="#cccccc" fill-opacity="0.28"/><rect x="1479" y="102" width="1" height="1.5" fill="#cccccc" fill-opacity="0.28"/><rect x="1481" y="102" width="1" height="1.5" fill="#569cd6" fill-opacity="0.48"/><rect x="1482" y="102" width="1" height="1.5" fill="#569cd6" fill-opacity="0.48"/><rect x="1483" y="102" width="1" height="1.5" fill="#569cd6" fill-opacity="0.62"/><rect x="1484" y="102" width="1" height="1.5" fill="#569cd6" fill-opacity="0.48"/><rect x="1485" y="102" width="1" height="1.5" fill="#cccccc" fill-opacity="0.28"/><rect x="1487" y="102" width="1" height="1.5" fill="#ce9178" fill-opacity="0.48"/><rect x="1488" y="102" width="1" height="1.5" fill="#ce9178" fill-opacity="0.48"/><rect x="1489" y="102" width="1" height="1.5" fill="#ce9178" fill-opacity="0.48"/><rect x="1490" y="102" width="1" height="1.5" fill="#ce9178" fill-opacity="0.28"/><rect x="1491" y="102" width="1" height="1.5" fill="#ce9178" fill-opacity="0.48"/><rect x="1492" y="102" width="1" height="1.5" fill="#ce9178" fill-opacity="0.48"/><rect x="1481" y="104" width="1" height="1.5" fill="#569cd6" fill-opacity="0.48"/><rect x="1482" y="104" width="1" height="1.5" fill="#569cd6" fill-opacity="0.48"/><rect x="1483" y="104" width="1" height="1.5" fill="#569cd6" fill-opacity="0.48"/><rect x="1484" y="104" width="1" height="1.5" fill="#569cd6" fill-opacity="0.28"/><rect x="1485" y="104" width="1" height="1.5" fill="#569cd6" fill-opacity="0.48"/><rect x="1486" y="104" width="1" height="1.5" fill="#569cd6" fill-opacity="0.48"/><rect x="1487" y="104" width="1" height="1.5" fill="#cccccc" fill-opacity="0.28"/><rect x="1483" y="106" width="1" height="1.5" fill="#569cd6" fill-opacity="0.48"/><rect x="1484" y="106" width="1" height="1.5" fill="#569cd6" fill-opacity="0.48"/><rect x="1485" y="106" width="1" height="1.5" fill="#569cd6" fill-opacity="0.48"/><rect x="1486" y="106" width="1" height="1.5" fill="#cccccc" fill-opacity="0.28"/><rect x="1485" y="108" width="1" height="1.5" fill="#569cd6" fill-opacity="0.48"/><rect x="1486" y="108" width="1" height="1.5" fill="#569cd6" fill-opacity="0.48"/><rect x="1487" y="108" width="1" height="1.5" fill="#569cd6" fill-opacity="0.48"/><rect x="1488" y="108" width="1" height="1.5" fill="#569cd6" fill-opacity="0.48"/><rect x="1489" y="108" width="1" height="1.5" fill="#cccccc" fill-opacity="0.28"/><rect x="1491" y="108" width="1" height="1.5" fill="#ce9178" fill-opacity="0.28"/><rect x="1487" y="110" width="1" height="1.5" fill="#ce9178" fill-opacity="0.28"/><rect x="1488" y="110" width="1" height="1.5" fill="#ce9178" fill-opacity="0.28"/><rect x="1489" y="110" width="1" height="1.5" fill="#ce9178" fill-opacity="0.28"/><rect x="1490" y="110" width="1" height="1.5" fill="#ce9178" fill-opacity="0.28"/><rect x="1491" y="110" width="1" height="1.5" fill="#ce9178" fill-opacity="0.28"/><rect x="1492" y="110" width="1" height="1.5" fill="#ce9178" fill-opacity="0.62"/><rect x="1493" y="110" width="1" height="1.5" fill="#ce9178" fill-opacity="0.62"/><rect x="1494" y="110" width="1" height="1.5" fill="#ce9178" fill-opacity="0.62"/><rect x="1495" y="110" width="1" height="1.5" fill="#ce9178" fill-opacity="0.62"/><rect x="1496" y="110" width="1" height="1.5" fill="#ce9178" fill-opacity="0.62"/><rect x="1498" y="110" width="1" height="1.5" fill="#ce9178" fill-opacity="0.62"/><rect x="1499" y="110" width="1" height="1.5" fill="#ce9178" fill-opacity="0.62"/><rect x="1500" y="110" width="1" height="1.5" fill="#ce9178" fill-opacity="0.62"/><rect x="1501" y="110" width="1" height="1.5" fill="#ce9178" fill-opacity="0.62"/><rect x="1502" y="110" width="1" height="1.5" fill="#ce9178" fill-opacity="0.62"/><rect x="1503" y="110" width="1" height="1.5" fill="#ce9178" fill-opacity="0.62"/><rect x="1505" y="110" width="1" height="1.5" fill="#ce9178" fill-opacity="0.62"/><rect x="1506" y="110" width="1" height="1.5" fill="#ce9178" fill-opacity="0.62"/><rect x="1507" y="110" width="1" height="1.5" fill="#ce9178" fill-opacity="0.62"/><rect x="1508" y="110" width="1" height="1.5" fill="#ce9178" fill-opacity="0.28"/><rect x="1509" y="110" width="1" height="1.5" fill="#ce9178" fill-opacity="0.28"/><rect x="1510" y="110" width="1" height="1.5" fill="#ce9178" fill-opacity="0.28"/><rect x="1511" y="110" width="1" height="1.5" fill="#ce9178" fill-opacity="0.28"/><rect x="1512" y="110" width="1" height="1.5" fill="#ce9178" fill-opacity="0.28"/><rect x="1487" y="112" width="1" height="1.5" fill="#ce9178" fill-opacity="0.62"/><rect x="1488" y="112" width="1" height="1.5" fill="#ce9178" fill-opacity="0.62"/><rect x="1489" y="112" width="1" height="1.5" fill="#ce9178" fill-opacity="0.48"/><rect x="1490" y="112" width="1" height="1.5" fill="#ce9178" fill-opacity="0.62"/><rect x="1491" y="112" width="1" height="1.5" fill="#ce9178" fill-opacity="0.62"/><rect x="1492" y="112" width="1" height="1.5" fill="#ce9178" fill-opacity="0.62"/><rect x="1493" y="112" width="1" height="1.5" fill="#ce9178" fill-opacity="0.62"/><rect x="1494" y="112" width="1" height="1.5" fill="#ce9178" fill-opacity="0.62"/><rect x="1495" y="112" width="1" height="1.5" fill="#ce9178" fill-opacity="0.62"/><rect x="1496" y="112" width="1" height="1.5" fill="#ce9178" fill-opacity="0.48"/><rect x="1497" y="112" width="1" height="1.5" fill="#ce9178" fill-opacity="0.62"/><rect x="1498" y="112" width="1" height="1.5" fill="#ce9178" fill-opacity="0.62"/><rect x="1499" y="112" width="1" height="1.5" fill="#ce9178" fill-opacity="0.48"/><rect x="1500" y="112" width="1" height="1.5" fill="#ce9178" fill-opacity="0.48"/><rect x="1501" y="112" width="1" height="1.5" fill="#ce9178" fill-opacity="0.62"/><rect x="1502" y="112" width="1" height="1.5" fill="#ce9178" fill-opacity="0.62"/><rect x="1503" y="112" width="1" height="1.5" fill="#ce9178" fill-opacity="0.62"/><rect x="1504" y="112" width="1" height="1.5" fill="#ce9178" fill-opacity="0.62"/><rect x="1505" y="112" width="1" height="1.5" fill="#ce9178" fill-opacity="0.62"/><rect x="1506" y="112" width="1" height="1.5" fill="#ce9178" fill-opacity="0.62"/><rect x="1507" y="112" width="1" height="1.5" fill="#ce9178" fill-opacity="0.62"/><rect x="1508" y="112" width="1" height="1.5" fill="#ce9178" fill-opacity="0.48"/><rect x="1509" y="112" width="1" height="1.5" fill="#ce9178" fill-opacity="0.62"/><rect x="1510" y="112" width="1" height="1.5" fill="#ce9178" fill-opacity="0.62"/><rect x="1511" y="112" width="1" height="1.5" fill="#ce9178" fill-opacity="0.48"/><rect x="1512" y="112" width="1" height="1.5" fill="#ce9178" fill-opacity="0.48"/><rect x="1513" y="112" width="1" height="1.5" fill="#ce9178" fill-opacity="0.62"/><rect x="1514" y="112" width="1" height="1.5" fill="#ce9178" fill-opacity="0.62"/><rect x="1515" y="112" width="1" height="1.5" fill="#ce9178" fill-opacity="0.62"/><rect x="1516" y="112" width="1" height="1.5" fill="#ce9178" fill-opacity="0.62"/><rect x="1517" y="112" width="1" height="1.5" fill="#ce9178" fill-opacity="0.48"/><rect x="1518" y="112" width="1" height="1.5" fill="#ce9178" fill-opacity="0.62"/><rect x="1519" y="112" width="1" height="1.5" fill="#ce9178" fill-opacity="0.62"/><rect x="1520" y="112" width="1" height="1.5" fill="#ce9178" fill-opacity="0.48"/><rect x="1521" y="112" width="1" height="1.5" fill="#ce9178" fill-opacity="0.62"/><rect x="1522" y="112" width="1" height="1.5" fill="#ce9178" fill-opacity="0.62"/><rect x="1523" y="112" width="1" height="1.5" fill="#ce9178" fill-opacity="0.48"/><rect x="1524" y="112" width="1" height="1.5" fill="#ce9178" fill-opacity="0.62"/><rect x="1525" y="112" width="1" height="1.5" fill="#ce9178" fill-opacity="0.62"/><rect x="1526" y="112" width="1" height="1.5" fill="#ce9178" fill-opacity="0.62"/><rect x="1527" y="112" width="1" height="1.5" fill="#ce9178" fill-opacity="0.62"/><rect x="1528" y="112" width="1" height="1.5" fill="#ce9178" fill-opacity="0.28"/><rect x="1529" y="112" width="1" height="1.5" fill="#ce9178" fill-opacity="0.48"/><rect x="1530" y="112" width="1" height="1.5" fill="#ce9178" fill-opacity="0.62"/><rect x="1531" y="112" width="1" height="1.5" fill="#ce9178" fill-opacity="0.48"/><rect x="1532" y="112" width="1" height="1.5" fill="#ce9178" fill-opacity="0.48"/><rect x="1533" y="112" width="1" height="1.5" fill="#ce9178" fill-opacity="0.62"/><rect x="1534" y="112" width="1" height="1.5" fill="#ce9178" fill-opacity="0.48"/><rect x="1535" y="112" width="1" height="1.5" fill="#ce9178" fill-opacity="0.62"/><rect x="1536" y="112" width="1" height="1.5" fill="#ce9178" fill-opacity="0.48"/><rect x="1537" y="112" width="1" height="1.5" fill="#ce9178" fill-opacity="0.48"/><rect x="1538" y="112" width="1" height="1.5" fill="#ce9178" fill-opacity="0.62"/><rect x="1539" y="112" width="1" height="1.5" fill="#ce9178" fill-opacity="0.62"/><rect x="1540" y="112" width="1" height="1.5" fill="#ce9178" fill-opacity="0.62"/><rect x="1541" y="112" width="1" height="1.5" fill="#ce9178" fill-opacity="0.62"/><rect x="1542" y="112" width="1" height="1.5" fill="#ce9178" fill-opacity="0.48"/><rect x="1543" y="112" width="1" height="1.5" fill="#ce9178" fill-opacity="0.62"/><rect x="1544" y="112" width="1" height="1.5" fill="#ce9178" fill-opacity="0.48"/><rect x="1545" y="112" width="1" height="1.5" fill="#ce9178" fill-opacity="0.48"/><rect x="1546" y="112" width="1" height="1.5" fill="#ce9178" fill-opacity="0.62"/><rect x="1547" y="112" width="1" height="1.5" fill="#ce9178" fill-opacity="0.48"/><rect x="1548" y="112" width="1" height="1.5" fill="#ce9178" fill-opacity="0.48"/><rect x="1549" y="112" width="1" height="1.5" fill="#ce9178" fill-opacity="0.62"/><rect x="1550" y="112" width="1" height="1.5" fill="#ce9178" fill-opacity="0.48"/><rect x="1487" y="114" width="1" height="1.5" fill="#ce9178" fill-opacity="0.62"/><rect x="1488" y="114" width="1" height="1.5" fill="#ce9178" fill-opacity="0.62"/><rect x="1489" y="114" width="1" height="1.5" fill="#ce9178" fill-opacity="0.62"/><rect x="1490" y="114" width="1" height="1.5" fill="#ce9178" fill-opacity="0.62"/><rect x="1491" y="114" width="1" height="1.5" fill="#ce9178" fill-opacity="0.62"/><rect x="1492" y="114" width="1" height="1.5" fill="#ce9178" fill-opacity="0.62"/><rect x="1493" y="114" width="1" height="1.5" fill="#ce9178" fill-opacity="0.48"/><rect x="1494" y="114" width="1" height="1.5" fill="#ce9178" fill-opacity="0.48"/><rect x="1495" y="114" width="1" height="1.5" fill="#ce9178" fill-opacity="0.48"/><rect x="1496" y="114" width="1" height="1.5" fill="#ce9178" fill-opacity="0.62"/><rect x="1497" y="114" width="1" height="1.5" fill="#ce9178" fill-opacity="0.28"/><rect x="1498" y="114" width="1" height="1.5" fill="#ce9178" fill-opacity="0.48"/><rect x="1499" y="114" width="1" height="1.5" fill="#ce9178" fill-opacity="0.48"/><rect x="1500" y="114" width="1" height="1.5" fill="#ce9178" fill-opacity="0.48"/><rect x="1501" y="114" width="1" height="1.5" fill="#ce9178" fill-opacity="0.62"/><rect x="1502" y="114" width="1" height="1.5" fill="#ce9178" fill-opacity="0.48"/><rect x="1503" y="114" width="1" height="1.5" fill="#ce9178" fill-opacity="0.48"/><rect x="1504" y="114" width="1" height="1.5" fill="#ce9178" fill-opacity="0.48"/><rect x="1505" y="114" width="1" height="1.5" fill="#ce9178" fill-opacity="0.62"/><rect x="1506" y="114" width="1" height="1.5" fill="#ce9178" fill-opacity="0.62"/><rect x="1507" y="114" width="1" height="1.5" fill="#ce9178" fill-opacity="0.62"/><rect x="1508" y="114" width="1" height="1.5" fill="#ce9178" fill-opacity="0.48"/><rect x="1509" y="114" width="1" height="1.5" fill="#ce9178" fill-opacity="0.48"/><rect x="1510" y="114" width="1" height="1.5" fill="#ce9178" fill-opacity="0.62"/><rect x="1511" y="114" width="1" height="1.5" fill="#ce9178" fill-opacity="0.48"/><rect x="1512" y="114" width="1" height="1.5" fill="#ce9178" fill-opacity="0.62"/><rect x="1513" y="114" width="1" height="1.5" fill="#ce9178" fill-opacity="0.62"/><rect x="1514" y="114" width="1" height="1.5" fill="#ce9178" fill-opacity="0.62"/><rect x="1515" y="114" width="1" height="1.5" fill="#ce9178" fill-opacity="0.62"/><rect x="1516" y="114" width="1" height="1.5" fill="#ce9178" fill-opacity="0.48"/><rect x="1517" y="114" width="1" height="1.5" fill="#ce9178" fill-opacity="0.62"/><rect x="1518" y="114" width="1" height="1.5" fill="#ce9178" fill-opacity="0.62"/><rect x="1519" y="114" width="1" height="1.5" fill="#ce9178" fill-opacity="0.48"/><rect x="1520" y="114" width="1" height="1.5" fill="#ce9178" fill-opacity="0.48"/><rect x="1521" y="114" width="1" height="1.5" fill="#ce9178" fill-opacity="0.48"/><rect x="1522" y="114" width="1" height="1.5" fill="#ce9178" fill-opacity="0.48"/><rect x="1523" y="114" width="1" height="1.5" fill="#ce9178" fill-opacity="0.48"/><rect x="1524" y="114" width="1" height="1.5" fill="#ce9178" fill-opacity="0.48"/><rect x="1525" y="114" width="1" height="1.5" fill="#ce9178" fill-opacity="0.48"/><rect x="1526" y="114" width="1" height="1.5" fill="#ce9178" fill-opacity="0.48"/><rect x="1527" y="114" width="1" height="1.5" fill="#ce9178" fill-opacity="0.48"/><rect x="1528" y="114" width="1" height="1.5" fill="#ce9178" fill-opacity="0.48"/><rect x="1529" y="114" width="1" height="1.5" fill="#ce9178" fill-opacity="0.62"/><rect x="1530" y="114" width="1" height="1.5" fill="#ce9178" fill-opacity="0.48"/><rect x="1531" y="114" width="1" height="1.5" fill="#ce9178" fill-opacity="0.48"/><rect x="1532" y="114" width="1" height="1.5" fill="#ce9178" fill-opacity="0.62"/><rect x="1533" y="114" width="1" height="1.5" fill="#ce9178" fill-opacity="0.28"/><rect x="1534" y="114" width="1" height="1.5" fill="#ce9178" fill-opacity="0.62"/><rect x="1535" y="114" width="1" height="1.5" fill="#ce9178" fill-opacity="0.48"/><rect x="1536" y="114" width="1" height="1.5" fill="#ce9178" fill-opacity="0.48"/><rect x="1537" y="114" width="1" height="1.5" fill="#ce9178" fill-opacity="0.62"/><rect x="1538" y="114" width="1" height="1.5" fill="#ce9178" fill-opacity="0.48"/><rect x="1539" y="114" width="1" height="1.5" fill="#ce9178" fill-opacity="0.62"/><rect x="1540" y="114" width="1" height="1.5" fill="#ce9178" fill-opacity="0.62"/><rect x="1541" y="114" width="1" height="1.5" fill="#ce9178" fill-opacity="0.62"/><rect x="1542" y="114" width="1" height="1.5" fill="#ce9178" fill-opacity="0.62"/><rect x="1543" y="114" width="1" height="1.5" fill="#ce9178" fill-opacity="0.62"/><rect x="1544" y="114" width="1" height="1.5" fill="#ce9178" fill-opacity="0.48"/><rect x="1545" y="114" width="1" height="1.5" fill="#ce9178" fill-opacity="0.48"/><rect x="1546" y="114" width="1" height="1.5" fill="#ce9178" fill-opacity="0.48"/><rect x="1487" y="116" width="1" height="1.5" fill="#ce9178" fill-opacity="0.28"/><rect x="1488" y="116" width="1" height="1.5" fill="#ce9178" fill-opacity="0.28"/><rect x="1489" y="116" width="1" height="1.5" fill="#ce9178" fill-opacity="0.28"/><rect x="1490" y="116" width="1" height="1.5" fill="#ce9178" fill-opacity="0.28"/><rect x="1491" y="116" width="1" height="1.5" fill="#ce9178" fill-opacity="0.28"/><rect x="1492" y="116" width="1" height="1.5" fill="#ce9178" fill-opacity="0.62"/><rect x="1493" y="116" width="1" height="1.5" fill="#ce9178" fill-opacity="0.62"/><rect x="1494" y="116" width="1" height="1.5" fill="#ce9178" fill-opacity="0.62"/><rect x="1496" y="116" width="1" height="1.5" fill="#ce9178" fill-opacity="0.62"/><rect x="1497" y="116" width="1" height="1.5" fill="#ce9178" fill-opacity="0.62"/><rect x="1498" y="116" width="1" height="1.5" fill="#ce9178" fill-opacity="0.62"/><rect x="1499" y="116" width="1" height="1.5" fill="#ce9178" fill-opacity="0.62"/><rect x="1500" y="116" width="1" height="1.5" fill="#ce9178" fill-opacity="0.62"/><rect x="1501" y="116" width="1" height="1.5" fill="#ce9178" fill-opacity="0.62"/><rect x="1503" y="116" width="1" height="1.5" fill="#ce9178" fill-opacity="0.62"/><rect x="1504" y="116" width="1" height="1.5" fill="#ce9178" fill-opacity="0.62"/><rect x="1505" y="116" width="1" height="1.5" fill="#ce9178" fill-opacity="0.62"/><rect x="1506" y="116" width="1" height="1.5" fill="#ce9178" fill-opacity="0.28"/><rect x="1507" y="116" width="1" height="1.5" fill="#ce9178" fill-opacity="0.28"/><rect x="1508" y="116" width="1" height="1.5" fill="#ce9178" fill-opacity="0.28"/><rect x="1509" y="116" width="1" height="1.5" fill="#ce9178" fill-opacity="0.28"/><rect x="1510" y="116" width="1" height="1.5" fill="#ce9178" fill-opacity="0.28"/><rect x="1483" y="118" width="1" height="1.5" fill="#569cd6" fill-opacity="0.48"/><rect x="1484" y="118" width="1" height="1.5" fill="#569cd6" fill-opacity="0.48"/><rect x="1485" y="118" width="1" height="1.5" fill="#569cd6" fill-opacity="0.28"/><rect x="1486" y="118" width="1" height="1.5" fill="#569cd6" fill-opacity="0.48"/><rect x="1487" y="118" width="1" height="1.5" fill="#569cd6" fill-opacity="0.48"/><rect x="1488" y="118" width="1" height="1.5" fill="#cccccc" fill-opacity="0.28"/><rect x="1485" y="120" width="1" height="1.5" fill="#569cd6" fill-opacity="0.48"/><rect x="1486" y="120" width="1" height="1.5" fill="#569cd6" fill-opacity="0.48"/><rect x="1487" y="120" width="1" height="1.5" fill="#569cd6" fill-opacity="0.28"/><rect x="1488" y="120" width="1" height="1.5" fill="#cccccc" fill-opacity="0.28"/><rect x="1490" y="120" width="1" height="1.5" fill="#ce9178" fill-opacity="0.48"/><rect x="1491" y="120" width="1" height="1.5" fill="#ce9178" fill-opacity="0.48"/><rect x="1492" y="120" width="1" height="1.5" fill="#ce9178" fill-opacity="0.48"/><rect x="1493" y="120" width="1" height="1.5" fill="#ce9178" fill-opacity="0.48"/><rect x="1494" y="120" width="1" height="1.5" fill="#ce9178" fill-opacity="0.48"/><rect x="1495" y="120" width="1" height="1.5" fill="#ce9178" fill-opacity="0.28"/><rect x="1496" y="120" width="1" height="1.5" fill="#ce9178" fill-opacity="0.48"/><rect x="1497" y="120" width="1" height="1.5" fill="#ce9178" fill-opacity="0.48"/><rect x="1498" y="120" width="1" height="1.5" fill="#ce9178" fill-opacity="0.48"/><rect x="1499" y="120" width="1" height="1.5" fill="#ce9178" fill-opacity="0.48"/><rect x="1500" y="120" width="1" height="1.5" fill="#ce9178" fill-opacity="0.48"/><rect x="1501" y="120" width="1" height="1.5" fill="#ce9178" fill-opacity="0.48"/><rect x="1502" y="120" width="1" height="1.5" fill="#ce9178" fill-opacity="0.48"/><rect x="1503" y="120" width="1" height="1.5" fill="#ce9178" fill-opacity="0.28"/><rect x="1504" y="120" width="1" height="1.5" fill="#ce9178" fill-opacity="0.48"/><rect x="1505" y="120" width="1" height="1.5" fill="#ce9178" fill-opacity="0.28"/><rect x="1506" y="120" width="1" height="1.5" fill="#ce9178" fill-opacity="0.48"/><rect x="1507" y="120" width="1" height="1.5" fill="#ce9178" fill-opacity="0.48"/><rect x="1508" y="120" width="1" height="1.5" fill="#ce9178" fill-opacity="0.48"/><rect x="1509" y="120" width="1" height="1.5" fill="#ce9178" fill-opacity="0.48"/><rect x="1510" y="120" width="1" height="1.5" fill="#ce9178" fill-opacity="0.48"/><rect x="1511" y="120" width="1" height="1.5" fill="#ce9178" fill-opacity="0.48"/><rect x="1512" y="120" width="1" height="1.5" fill="#ce9178" fill-opacity="0.28"/><rect x="1513" y="120" width="1" height="1.5" fill="#ce9178" fill-opacity="0.48"/><rect x="1514" y="120" width="1" height="1.5" fill="#ce9178" fill-opacity="0.48"/><rect x="1515" y="120" width="1" height="1.5" fill="#ce9178" fill-opacity="0.48"/><rect x="1485" y="122" width="1" height="1.5" fill="#569cd6" fill-opacity="0.28"/><rect x="1486" y="122" width="1" height="1.5" fill="#569cd6" fill-opacity="0.48"/><rect x="1487" y="122" width="1" height="1.5" fill="#569cd6" fill-opacity="0.48"/><rect x="1488" y="122" width="1" height="1.5" fill="#569cd6" fill-opacity="0.48"/><rect x="1489" y="122" width="1" height="1.5" fill="#569cd6" fill-opacity="0.48"/><rect x="1490" y="122" width="1" height="1.5" fill="#569cd6" fill-opacity="0.48"/><rect x="1491" y="122" width="1" height="1.5" fill="#569cd6" fill-opacity="0.48"/><rect x="1492" y="122" width="1" height="1.5" fill="#569cd6" fill-opacity="0.48"/><rect x="1493" y="122" width="1" height="1.5" fill="#569cd6" fill-opacity="0.62"/><rect x="1494" y="122" width="1" height="1.5" fill="#569cd6" fill-opacity="0.48"/><rect x="1495" y="122" width="1" height="1.5" fill="#569cd6" fill-opacity="0.48"/><rect x="1496" y="122" width="1" height="1.5" fill="#569cd6" fill-opacity="0.48"/><rect x="1497" y="122" width="1" height="1.5" fill="#569cd6" fill-opacity="0.48"/><rect x="1498" y="122" width="1" height="1.5" fill="#569cd6" fill-opacity="0.48"/><rect x="1499" y="122" width="1" height="1.5" fill="#569cd6" fill-opacity="0.62"/><rect x="1500" y="122" width="1" height="1.5" fill="#569cd6" fill-opacity="0.28"/><rect x="1501" y="122" width="1" height="1.5" fill="#569cd6" fill-opacity="0.48"/><rect x="1502" y="122" width="1" height="1.5" fill="#569cd6" fill-opacity="0.48"/><rect x="1503" y="122" width="1" height="1.5" fill="#cccccc" fill-opacity="0.28"/><rect x="1505" y="122" width="1" height="1.5" fill="#ce9178" fill-opacity="0.48"/><rect x="1506" y="122" width="1" height="1.5" fill="#ce9178" fill-opacity="0.48"/><rect x="1507" y="122" width="1" height="1.5" fill="#ce9178" fill-opacity="0.48"/><rect x="1508" y="122" width="1" height="1.5" fill="#ce9178" fill-opacity="0.48"/><rect x="1485" y="124" width="1" height="1.5" fill="#569cd6" fill-opacity="0.28"/><rect x="1486" y="124" width="1" height="1.5" fill="#569cd6" fill-opacity="0.48"/><rect x="1487" y="124" width="1" height="1.5" fill="#569cd6" fill-opacity="0.48"/><rect x="1488" y="124" width="1" height="1.5" fill="#569cd6" fill-opacity="0.48"/><rect x="1489" y="124" width="1" height="1.5" fill="#569cd6" fill-opacity="0.48"/><rect x="1490" y="124" width="1" height="1.5" fill="#569cd6" fill-opacity="0.48"/><rect x="1491" y="124" width="1" height="1.5" fill="#569cd6" fill-opacity="0.48"/><rect x="1492" y="124" width="1" height="1.5" fill="#569cd6" fill-opacity="0.48"/><rect x="1493" y="124" width="1" height="1.5" fill="#569cd6" fill-opacity="0.62"/><rect x="1494" y="124" width="1" height="1.5" fill="#569cd6" fill-opacity="0.48"/><rect x="1495" y="124" width="1" height="1.5" fill="#569cd6" fill-opacity="0.48"/><rect x="1496" y="124" width="1" height="1.5" fill="#569cd6" fill-opacity="0.48"/><rect x="1497" y="124" width="1" height="1.5" fill="#569cd6" fill-opacity="0.48"/><rect x="1498" y="124" width="1" height="1.5" fill="#569cd6" fill-opacity="0.48"/><rect x="1499" y="124" width="1" height="1.5" fill="#569cd6" fill-opacity="0.62"/><rect x="1500" y="124" width="1" height="1.5" fill="#569cd6" fill-opacity="0.62"/><rect x="1501" y="124" width="1" height="1.5" fill="#569cd6" fill-opacity="0.62"/><rect x="1502" y="124" width="1" height="1.5" fill="#cccccc" fill-opacity="0.28"/><rect x="1504" y="124" width="1" height="1.5" fill="#ce9178" fill-opacity="0.48"/><rect x="1505" y="124" width="1" height="1.5" fill="#ce9178" fill-opacity="0.48"/><rect x="1506" y="124" width="1" height="1.5" fill="#ce9178" fill-opacity="0.48"/><rect x="1507" y="124" width="1" height="1.5" fill="#ce9178" fill-opacity="0.48"/><rect x="1479" y="126" width="1" height="1.5" fill="#569cd6" fill-opacity="0.48"/><rect x="1480" y="126" width="1" height="1.5" fill="#569cd6" fill-opacity="0.48"/><rect x="1481" y="126" width="1" height="1.5" fill="#569cd6" fill-opacity="0.28"/><rect x="1482" y="126" width="1" height="1.5" fill="#569cd6" fill-opacity="0.28"/><rect x="1483" y="126" width="1" height="1.5" fill="#569cd6" fill-opacity="0.48"/><rect x="1484" y="126" width="1" height="1.5" fill="#569cd6" fill-opacity="0.48"/><rect x="1485" y="126" width="1" height="1.5" fill="#569cd6" fill-opacity="0.48"/><rect x="1486" y="126" width="1" height="1.5" fill="#569cd6" fill-opacity="0.28"/><rect x="1487" y="126" width="1" height="1.5" fill="#569cd6" fill-opacity="0.48"/><rect x="1488" y="126" width="1" height="1.5" fill="#569cd6" fill-opacity="0.48"/><rect x="1489" y="126" width="1" height="1.5" fill="#569cd6" fill-opacity="0.48"/><rect x="1490" y="126" width="1" height="1.5" fill="#cccccc" fill-opacity="0.28"/><rect x="1479" y="128" width="1" height="1.5" fill="#cccccc" fill-opacity="0.28"/><rect x="1481" y="128" width="1" height="1.5" fill="#569cd6" fill-opacity="0.48"/><rect x="1482" y="128" width="1" height="1.5" fill="#569cd6" fill-opacity="0.48"/><rect x="1483" y="128" width="1" height="1.5" fill="#569cd6" fill-opacity="0.48"/><rect x="1484" y="128" width="1" height="1.5" fill="#569cd6" fill-opacity="0.48"/><rect x="1485" y="128" width="1" height="1.5" fill="#569cd6" fill-opacity="0.48"/><rect x="1486" y="128" width="1" height="1.5" fill="#569cd6" fill-opacity="0.48"/><rect x="1487" y="128" width="1" height="1.5" fill="#569cd6" fill-opacity="0.48"/><rect x="1488" y="128" width="1" height="1.5" fill="#569cd6" fill-opacity="0.28"/><rect x="1489" y="128" width="1" height="1.5" fill="#569cd6" fill-opacity="0.48"/><rect x="1490" y="128" width="1" height="1.5" fill="#569cd6" fill-opacity="0.48"/><rect x="1491" y="128" width="1" height="1.5" fill="#cccccc" fill-opacity="0.28"/><rect x="1493" y="128" width="1" height="1.5" fill="#ce9178" fill-opacity="0.48"/><rect x="1494" y="128" width="1" height="1.5" fill="#ce9178" fill-opacity="0.28"/><rect x="1483" y="130" width="1" height="1.5" fill="#ce9178" fill-opacity="0.28"/><rect x="1484" y="130" width="1" height="1.5" fill="#ce9178" fill-opacity="0.62"/><rect x="1485" y="130" width="1" height="1.5" fill="#ce9178" fill-opacity="0.48"/><rect x="1486" y="130" width="1" height="1.5" fill="#ce9178" fill-opacity="0.48"/><rect x="1487" y="130" width="1" height="1.5" fill="#ce9178" fill-opacity="0.48"/><rect x="1488" y="130" width="1" height="1.5" fill="#ce9178" fill-opacity="0.48"/><rect x="1489" y="130" width="1" height="1.5" fill="#ce9178" fill-opacity="0.28"/><rect x="1490" y="130" width="1" height="1.5" fill="#ce9178" fill-opacity="0.48"/><rect x="1491" y="130" width="1" height="1.5" fill="#ce9178" fill-opacity="0.48"/><rect x="1492" y="130" width="1" height="1.5" fill="#ce9178" fill-opacity="0.48"/><rect x="1493" y="130" width="1" height="1.5" fill="#ce9178" fill-opacity="0.48"/><rect x="1494" y="130" width="1" height="1.5" fill="#ce9178" fill-opacity="0.48"/><rect x="1495" y="130" width="1" height="1.5" fill="#ce9178" fill-opacity="0.28"/><rect x="1496" y="130" width="1" height="1.5" fill="#ce9178" fill-opacity="0.48"/><rect x="1497" y="130" width="1" height="1.5" fill="#ce9178" fill-opacity="0.48"/><rect x="1498" y="130" width="1" height="1.5" fill="#ce9178" fill-opacity="0.48"/><rect x="1499" y="130" width="1" height="1.5" fill="#ce9178" fill-opacity="0.62"/><rect x="1500" y="130" width="1" height="1.5" fill="#ce9178" fill-opacity="0.62"/><rect x="1501" y="130" width="1" height="1.5" fill="#ce9178" fill-opacity="0.48"/><rect x="1502" y="130" width="1" height="1.5" fill="#ce9178" fill-opacity="0.48"/><rect x="1503" y="130" width="1" height="1.5" fill="#ce9178" fill-opacity="0.48"/><rect x="1504" y="130" width="1" height="1.5" fill="#ce9178" fill-opacity="0.48"/><rect x="1505" y="130" width="1" height="1.5" fill="#ce9178" fill-opacity="0.28"/><rect x="1506" y="130" width="1" height="1.5" fill="#ce9178" fill-opacity="0.62"/><rect x="1507" y="130" width="1" height="1.5" fill="#ce9178" fill-opacity="0.48"/><rect x="1508" y="130" width="1" height="1.5" fill="#ce9178" fill-opacity="0.48"/><rect x="1509" y="130" width="1" height="1.5" fill="#ce9178" fill-opacity="0.48"/><rect x="1510" y="130" width="1" height="1.5" fill="#ce9178" fill-opacity="0.28"/><rect x="1511" y="130" width="1" height="1.5" fill="#ce9178" fill-opacity="0.62"/><rect x="1512" y="130" width="1" height="1.5" fill="#ce9178" fill-opacity="0.48"/><rect x="1513" y="130" width="1" height="1.5" fill="#ce9178" fill-opacity="0.48"/><rect x="1514" y="130" width="1" height="1.5" fill="#ce9178" fill-opacity="0.48"/><rect x="1515" y="130" width="1" height="1.5" fill="#ce9178" fill-opacity="0.28"/><rect x="1517" y="130" width="1" height="1.5" fill="#ce9178" fill-opacity="0.48"/><rect x="1518" y="130" width="1" height="1.5" fill="#ce9178" fill-opacity="0.48"/><rect x="1519" y="130" width="1" height="1.5" fill="#ce9178" fill-opacity="0.48"/><rect x="1520" y="130" width="1" height="1.5" fill="#ce9178" fill-opacity="0.28"/><rect x="1521" y="130" width="1" height="1.5" fill="#ce9178" fill-opacity="0.48"/><rect x="1522" y="130" width="1" height="1.5" fill="#ce9178" fill-opacity="0.48"/><rect x="1523" y="130" width="1" height="1.5" fill="#ce9178" fill-opacity="0.62"/><rect x="1524" y="130" width="1" height="1.5" fill="#ce9178" fill-opacity="0.62"/><rect x="1525" y="130" width="1" height="1.5" fill="#ce9178" fill-opacity="0.48"/><rect x="1526" y="130" width="1" height="1.5" fill="#ce9178" fill-opacity="0.48"/><rect x="1527" y="130" width="1" height="1.5" fill="#ce9178" fill-opacity="0.48"/><rect x="1528" y="130" width="1" height="1.5" fill="#ce9178" fill-opacity="0.62"/><rect x="1529" y="130" width="1" height="1.5" fill="#ce9178" fill-opacity="0.28"/><rect x="1530" y="130" width="1" height="1.5" fill="#ce9178" fill-opacity="0.48"/><rect x="1531" y="130" width="1" height="1.5" fill="#ce9178" fill-opacity="0.48"/><rect x="1532" y="130" width="1" height="1.5" fill="#ce9178" fill-opacity="0.48"/><rect x="1533" y="130" width="1" height="1.5" fill="#ce9178" fill-opacity="0.48"/><rect x="1534" y="130" width="1" height="1.5" fill="#ce9178" fill-opacity="0.48"/><rect x="1535" y="130" width="1" height="1.5" fill="#ce9178" fill-opacity="0.48"/><rect x="1536" y="130" width="1" height="1.5" fill="#ce9178" fill-opacity="0.48"/><rect x="1537" y="130" width="1" height="1.5" fill="#ce9178" fill-opacity="0.48"/><rect x="1538" y="130" width="1" height="1.5" fill="#ce9178" fill-opacity="0.48"/><rect x="1539" y="130" width="1" height="1.5" fill="#ce9178" fill-opacity="0.28"/><rect x="1540" y="130" width="1" height="1.5" fill="#ce9178" fill-opacity="0.62"/><rect x="1541" y="130" width="1" height="1.5" fill="#ce9178" fill-opacity="0.48"/><rect x="1542" y="130" width="1" height="1.5" fill="#ce9178" fill-opacity="0.48"/><rect x="1543" y="130" width="1" height="1.5" fill="#ce9178" fill-opacity="0.48"/><rect x="1544" y="130" width="1" height="1.5" fill="#ce9178" fill-opacity="0.28"/><rect x="1546" y="130" width="1" height="1.5" fill="#ce9178" fill-opacity="0.48"/><rect x="1547" y="130" width="1" height="1.5" fill="#ce9178" fill-opacity="0.48"/><rect x="1548" y="130" width="1" height="1.5" fill="#ce9178" fill-opacity="0.48"/><rect x="1549" y="130" width="1" height="1.5" fill="#ce9178" fill-opacity="0.48"/><rect x="1550" y="130" width="1" height="1.5" fill="#ce9178" fill-opacity="0.48"/><rect x="1551" y="130" width="1" height="1.5" fill="#ce9178" fill-opacity="0.48"/><rect x="1552" y="130" width="1" height="1.5" fill="#ce9178" fill-opacity="0.48"/><rect x="1553" y="130" width="1" height="1.5" fill="#ce9178" fill-opacity="0.48"/><rect x="1554" y="130" width="1" height="1.5" fill="#ce9178" fill-opacity="0.48"/><rect x="1555" y="130" width="1" height="1.5" fill="#ce9178" fill-opacity="0.48"/><rect x="1556" y="130" width="1" height="1.5" fill="#ce9178" fill-opacity="0.28"/><rect x="1557" y="130" width="1" height="1.5" fill="#ce9178" fill-opacity="0.48"/><rect x="1558" y="130" width="1" height="1.5" fill="#ce9178" fill-opacity="0.48"/><rect x="1559" y="130" width="1" height="1.5" fill="#ce9178" fill-opacity="0.48"/><rect x="1560" y="130" width="1" height="1.5" fill="#ce9178" fill-opacity="0.28"/><rect x="1561" y="130" width="1" height="1.5" fill="#ce9178" fill-opacity="0.48"/><rect x="1562" y="130" width="1" height="1.5" fill="#ce9178" fill-opacity="0.48"/><rect x="1563" y="130" width="1" height="1.5" fill="#ce9178" fill-opacity="0.48"/><rect x="1564" y="130" width="1" height="1.5" fill="#ce9178" fill-opacity="0.48"/><rect x="1565" y="130" width="1" height="1.5" fill="#ce9178" fill-opacity="0.48"/><rect x="1566" y="130" width="1" height="1.5" fill="#ce9178" fill-opacity="0.28"/><rect x="1567" y="130" width="1" height="1.5" fill="#ce9178" fill-opacity="0.48"/><rect x="1568" y="130" width="1" height="1.5" fill="#ce9178" fill-opacity="0.28"/><rect x="1569" y="130" width="1" height="1.5" fill="#ce9178" fill-opacity="0.28"/><rect x="1570" y="130" width="1" height="1.5" fill="#ce9178" fill-opacity="0.48"/><rect x="1571" y="130" width="1" height="1.5" fill="#ce9178" fill-opacity="0.48"/><rect x="1572" y="130" width="1" height="1.5" fill="#ce9178" fill-opacity="0.28"/><rect x="1574" y="130" width="1" height="1.5" fill="#ce9178" fill-opacity="0.48"/><rect x="1575" y="130" width="1" height="1.5" fill="#ce9178" fill-opacity="0.48"/><rect x="1576" y="130" width="1" height="1.5" fill="#ce9178" fill-opacity="0.62"/><rect x="1577" y="130" width="1" height="1.5" fill="#ce9178" fill-opacity="0.48"/><rect x="1481" y="132" width="1" height="1.5" fill="#569cd6" fill-opacity="0.62"/><rect x="1482" y="132" width="1" height="1.5" fill="#569cd6" fill-opacity="0.48"/><rect x="1483" y="132" width="1" height="1.5" fill="#569cd6" fill-opacity="0.48"/><rect x="1484" y="132" width="1" height="1.5" fill="#569cd6" fill-opacity="0.48"/><rect x="1485" y="132" width="1" height="1.5" fill="#569cd6" fill-opacity="0.48"/><rect x="1486" y="132" width="1" height="1.5" fill="#569cd6" fill-opacity="0.48"/><rect x="1487" y="132" width="1" height="1.5" fill="#569cd6" fill-opacity="0.48"/><rect x="1488" y="132" width="1" height="1.5" fill="#cccccc" fill-opacity="0.28"/><rect x="1490" y="132" width="1" height="1.5" fill="#ce9178" fill-opacity="0.28"/><rect x="1491" y="132" width="1" height="1.5" fill="#ce9178" fill-opacity="0.62"/><rect x="1492" y="132" width="1" height="1.5" fill="#ce9178" fill-opacity="0.62"/><rect x="1493" y="132" width="1" height="1.5" fill="#ce9178" fill-opacity="0.48"/><rect x="1494" y="132" width="1" height="1.5" fill="#ce9178" fill-opacity="0.48"/><rect x="1495" y="132" width="1" height="1.5" fill="#ce9178" fill-opacity="0.48"/><rect x="1497" y="132" width="1" height="1.5" fill="#ce9178" fill-opacity="0.48"/><rect x="1498" y="132" width="1" height="1.5" fill="#ce9178" fill-opacity="0.28"/><rect x="1499" y="132" width="1" height="1.5" fill="#ce9178" fill-opacity="0.48"/><rect x="1500" y="132" width="1" height="1.5" fill="#ce9178" fill-opacity="0.48"/><rect x="1501" y="132" width="1" height="1.5" fill="#ce9178" fill-opacity="0.48"/><rect x="1502" y="132" width="1" height="1.5" fill="#ce9178" fill-opacity="0.48"/><rect x="1503" y="132" width="1" height="1.5" fill="#ce9178" fill-opacity="0.48"/><rect x="1504" y="132" width="1" height="1.5" fill="#ce9178" fill-opacity="0.48"/><rect x="1505" y="132" width="1" height="1.5" fill="#ce9178" fill-opacity="0.48"/><rect x="1507" y="132" width="1" height="1.5" fill="#ce9178" fill-opacity="0.48"/><rect x="1508" y="132" width="1" height="1.5" fill="#ce9178" fill-opacity="0.48"/><rect x="1509" y="132" width="1" height="1.5" fill="#ce9178" fill-opacity="0.48"/><rect x="1510" y="132" width="1" height="1.5" fill="#ce9178" fill-opacity="0.28"/><rect x="1511" y="132" width="1" height="1.5" fill="#ce9178" fill-opacity="0.48"/><rect x="1512" y="132" width="1" height="1.5" fill="#ce9178" fill-opacity="0.28"/><rect x="1513" y="132" width="1" height="1.5" fill="#ce9178" fill-opacity="0.48"/><rect x="1514" y="132" width="1" height="1.5" fill="#ce9178" fill-opacity="0.48"/><rect x="1515" y="132" width="1" height="1.5" fill="#ce9178" fill-opacity="0.48"/><rect x="1516" y="132" width="1" height="1.5" fill="#ce9178" fill-opacity="0.28"/><rect x="1517" y="132" width="1" height="1.5" fill="#ce9178" fill-opacity="0.48"/><rect x="1518" y="132" width="1" height="1.5" fill="#ce9178" fill-opacity="0.48"/><rect x="1520" y="132" width="1" height="1.5" fill="#ce9178" fill-opacity="0.48"/><rect x="1521" y="132" width="1" height="1.5" fill="#ce9178" fill-opacity="0.48"/><rect x="1522" y="132" width="1" height="1.5" fill="#ce9178" fill-opacity="0.28"/><rect x="1523" y="132" width="1" height="1.5" fill="#ce9178" fill-opacity="0.28"/><rect x="1524" y="132" width="1" height="1.5" fill="#ce9178" fill-opacity="0.48"/><rect x="1525" y="132" width="1" height="1.5" fill="#ce9178" fill-opacity="0.48"/><rect x="1526" y="132" width="1" height="1.5" fill="#ce9178" fill-opacity="0.28"/></svg>
<div id="ovborder"></div>
<div id="ovcursor"></div>
<!-- annotation ellipse -->
<svg class="ic" style="left:230px;top:80px" width="100" height="60" viewBox="230 80 100 60"><path d="M243 85 L262 90.5 L302 113 L275 119.5 L250 109 L237.5 99 Z" fill="#0a1000" fill-opacity="0.14"/><ellipse cx="278" cy="108.6" rx="33.8" ry="15.9" fill="none" stroke="#b8ff00" stroke-width="7.4"/></svg>
<div id="edgebottom"></div>
<!-- panel -->
<div id="panel"></div>
<div class="ptab" style="left:24px">PROBLEMS</div>
<div class="ptab" style="left:104px">OUTPUT</div>
<div class="ptab" style="left:171px">DEBUG CONSOLE</div>
<div class="ptab act" style="left:284px">TERMINAL</div>
<div class="ptab" style="left:360px">PORTS</div>
<div class="ptab" style="left:419px">ANSIBLE</div>
<div id="ptabline"></div>
<!-- terminal toolbar -->
<svg class="ic" style="left:1342px;top:558px" width="17" height="16" viewBox="0 0 17 16" fill="none" stroke="#cccccc" stroke-width="1.1"><rect x="1.5" y="1.5" width="14" height="13" rx="1.5"/><path d="M4 5 L6.8 7.5 L4 10"/><path d="M8 11 H12.5"/></svg>
<div class="abs" style="left:1363px;top:558px;line-height:14px;font-size:11px;color:#cca700;white-space:pre">bash</div>
<svg class="ic" style="left:1390px;top:558px" width="16" height="15" viewBox="0 0 16 15" fill="none" stroke="#cca700" stroke-width="1.1"><path d="M8 1.5 L14.8 13.5 H1.2 Z"/><path d="M8 5.5 V9.5"/><circle cx="8" cy="11.3" r="0.5" fill="#cca700"/></svg>
<svg class="ic" style="left:1416px;top:559px" width="16" height="15" viewBox="0 0 16 15" fill="none" stroke="#cccccc" stroke-width="1.2"><path d="M7.5 1 V14 M1 7.5 H14"/></svg>
<svg class="ic" style="left:1435px;top:563px" width="10" height="7" viewBox="0 0 10 7" fill="none" stroke="#cccccc" stroke-width="1"><path d="M1 1.5 L5 5.5 L9 1.5"/></svg>
<svg class="ic" style="left:1455px;top:558px" width="17" height="16" viewBox="0 0 17 16" fill="none" stroke="#cccccc" stroke-width="1.1"><rect x="1.5" y="1.5" width="14" height="13" rx="2"/><path d="M8.5 1.5 V14.5"/></svg>
<svg class="ic" style="left:1481px;top:558px" width="16" height="16" viewBox="0 0 16 16" fill="none" stroke="#cccccc" stroke-width="1.1"><path d="M1.5 3.5 H14.5"/><path d="M5.5 3.5 V2 H10.5 V3.5"/><path d="M3 3.5 L4 14.5 H12 L13 3.5"/><path d="M6.5 6 V12 M9.5 6 V12"/></svg>
<svg class="ic" style="left:1509px;top:564px" width="14" height="4" viewBox="0 0 14 4" fill="#cccccc"><circle cx="2" cy="2" r="1.1"/><circle cx="7" cy="2" r="1.1"/><circle cx="12" cy="2" r="1.1"/></svg>
<div class="abs" style="left:1534px;top:559px;width:1px;height:16px;background:#6a6a6a"></div>
<svg class="ic" style="left:1546px;top:558px" width="16" height="16" viewBox="0 0 16 16" fill="none" stroke="#cccccc" stroke-width="1.1"><path d="M1.5 5 V1.5 H5 M11 1.5 H14.5 V5 M14.5 11 V14.5 H11 M5 14.5 H1.5 V11"/></svg>
<svg class="ic" style="left:1574px;top:560px" width="14" height="14" viewBox="0 0 14 14" fill="none" stroke="#cccccc" stroke-width="1.2"><path d="M1.5 1.5 L12.5 12.5 M12.5 1.5 L1.5 12.5"/></svg>
<!-- terminal -->
<div class="tl" style="top:587px">                     <span class="w">:</span><span class="pb">~/projects/understanding-docker-image-signing</span><span class="w">$ </span><span class="w">kubectl run test-signed --image=kcandidate/myapp:v1 -n demo --command -- sleep infinity</span></div>
<div class="gbox" style="top:586px"></div>
<div class="dot" style="top:590px"></div>
<div class="tl" style="top:604px"><span class="w">pod/test-signed created</span></div>
<div class="tl" style="top:621px">                     <span class="w">:</span><span class="pb">~/projects/understanding-docker-image-signing</span><span class="w">$ </span><span class="w">kubectl get pods -n demo</span></div>
<div class="gbox" style="top:620px"></div>
<div class="dot" style="top:624px"></div>
<div class="tl" style="top:638px"><span class="w">NAME          READY   STATUS    RESTARTS   AGE</span></div>
<div class="tl" style="top:655px"><span class="w">test-signed   1/1     Running   0          7s</span></div>
<div class="tl" style="top:672px">                     <span class="w">:</span><span class="pb">~/projects/understanding-docker-image-signing</span><span class="w">$ </span><span class="w">kubectl run test-unsigned --image=kcandidate/myapp:unsigned -n demo --command -- sleep infinity</span></div>
<div class="gbox" style="top:672px;height:17px"></div>
<svg class="edot" style="position:absolute;left:10px;top:675px" width="11" height="11" viewBox="0 0 11 11"><circle cx="5.5" cy="5.5" r="4.3" fill="none" stroke="#f14c4c" stroke-width="1.1"/><path d="M3.6 3.6L7.4 7.4M7.4 3.6L3.6 7.4" stroke="#f14c4c" stroke-width="1.1"/></svg>
<div class="tl" style="top:689px"><span class="w">Error from server: admission webhook "ivpol.validate.kyverno.svc-fail" denied the request: Policy verify-image-signature failed: Image signature verification failed</span></div>
<div class="tl" style="top:706px">                     <span class="w">:</span><span class="pb">~/projects/understanding-docker-image-signing</span><span class="w">$ </span><span class="w">kubectl logs -n kyverno -l app.kubernetes.io/component=admission-controller --tail=50 | grep -E "verifying cosign|verification</span></div>
<div class="gbox" style="top:705px"></div>
<div class="dot" style="top:709px"></div>
<div class="tl" style="top:723px"><span class="w"> failed"</span></div>
<div class="tl" style="top:740px"><span class="w">Defaulted container "kyverno" out of: kyverno, kyverno-pre (init)</span></div>
<div class="tl" style="top:757px"><span class="g">2026-02-16T20:03:54Z </span><span class="tb">TRC</span><span class="w"> </span><span class="bw">github.com/kyverno/kyverno/pkg/imageverification/imageverifiers/cosign/verifier.go:54</span><span class="w"> </span><span class="c">&gt;</span><span class="w"> </span><span class="br">verifying cosign</span><span class="w"> image signature </span><span class="c">attestor=</span><span class="w">cosign </span><span class="c">digest=</span><span class="w">sha256:8cd7feb4d1e705dcf6e</span></div>
<div class="tl" style="top:774px"><span class="w">e5b6123577d3e68ec68d5ae486b9e9906fd5bcb085da2 </span><span class="c">image=</span><span class="w">kcandidate/myapp:v1 </span><span class="c">logger=</span><span class="w">Cosign </span><span class="c">v=</span><span class="w">2</span></div>
<div class="tl" style="top:791px"><span class="g">2026-02-16T20:04:24Z </span><span class="tb">TRC</span><span class="w"> </span><span class="bw">github.com/kyverno/kyverno/pkg/imageverification/imageverifiers/cosign/verifier.go:54</span><span class="w"> </span><span class="c">&gt;</span><span class="w"> </span><span class="br">verifying cosign</span><span class="w"> image signature </span><span class="c">attestor=</span><span class="w">cosign </span><span class="c">digest=</span><span class="w">sha256:61b89d0e7118cfdba47</span></div>
<div class="tl" style="top:808px"><span class="w">52dd407163b08ee74b7bf92a99b56c1738f140becc01e </span><span class="c">image=</span><span class="w">kcandidate/myapp:unsigned </span><span class="c">logger=</span><span class="w">Cosign </span><span class="c">v=</span><span class="w">2</span></div>
<div class="tl" style="top:825px"><span class="g">2026-02-16T20:04:26Z </span><span class="tr">ERR</span><span class="w"> </span><span class="bw">github.com/kyverno/kyverno/pkg/imageverification/imageverifiers/cosign/verifier.go:80</span><span class="w"> </span><span class="c">&gt;</span><span class="w"> </span><span class="bw">image</span><span class="w"> </span><span class="br">verification failed</span><span class="w"> </span><span class="c">error=</span><span class="br">"failed to verify cosign signatures: no signatures</span></div>
<div class="tl" style="top:842px"><span class="br"> found"</span><span class="w"> </span><span class="c">attestor=</span><span class="w">cosign </span><span class="c">digest=</span><span class="w">sha256:61b89d0e7118cfdba4752dd407163b08ee74b7bf92a99b56c1738f140becc01e </span><span class="c">image=</span><span class="w">kcandidate/myapp:unsigned </span><span class="c">logger=</span><span class="w">Cosign</span></div>
<div class="tl" style="top:859px"><span class="g">2026-02-16T20:05:54Z </span><span class="tb">TRC</span><span class="w"> </span><span class="bw">github.com/kyverno/kyverno/pkg/imageverification/imageverifiers/cosign/verifier.go:54</span><span class="w"> </span><span class="c">&gt;</span><span class="w"> </span><span class="br">verifying cosign</span><span class="w"> image signature </span><span class="c">attestor=</span><span class="w">cosign </span><span class="c">digest=</span><span class="w">sha256:8cd7feb4d1e705dcf6e</span></div>
<div class="tl" style="top:876px"><span class="w">e5b6123577d3e68ec68d5ae486b9e9906fd5bcb085da2 </span><span class="c">image=</span><span class="w">kcandidate/myapp:v1 </span><span class="c">logger=</span><span class="w">Cosign </span><span class="c">v=</span><span class="w">2</span></div>
<div class="tl" style="top:893px"><span class="g">2026-02-16T20:06:13Z </span><span class="tb">TRC</span><span class="w"> </span><span class="bw">github.com/kyverno/kyverno/pkg/imageverification/imageverifiers/cosign/verifier.go:54</span><span class="w"> </span><span class="c">&gt;</span><span class="w"> </span><span class="br">verifying cosign</span><span class="w"> image signature </span><span class="c">attestor=</span><span class="w">cosign </span><span class="c">digest=</span><span class="w">sha256:61b89d0e7118cfdba47</span></div>
<div class="tl" style="top:910px"><span class="w">52dd407163b08ee74b7bf92a99b56c1738f140becc01e </span><span class="c">image=</span><span class="w">kcandidate/myapp:unsigned </span><span class="c">logger=</span><span class="w">Cosign </span><span class="c">v=</span><span class="w">2</span></div>
<div class="tl" style="top:927px"><span class="g">2026-02-16T20:06:15Z </span><span class="tr">ERR</span><span class="w"> </span><span class="bw">github.com/kyverno/kyverno/pkg/imageverification/imageverifiers/cosign/verifier.go:80</span><span class="w"> </span><span class="c">&gt;</span><span class="w"> </span><span class="bw">image</span><span class="w"> </span><span class="br">verification failed</span><span class="w"> </span><span class="c">error=</span><span class="br">"failed to verify cosign signatures: no signatures</span></div>
<div class="tl" style="top:944px"><span class="br"> found"</span><span class="w"> </span><span class="c">attestor=</span><span class="w">cosign </span><span class="c">digest=</span><span class="w">sha256:61b89d0e7118cfdba4752dd407163b08ee74b7bf92a99b56c1738f140becc01e </span><span class="c">image=</span><span class="w">kcandidate/myapp:unsigned </span><span class="c">logger=</span><span class="w">Cosign</span></div>
<div class="tl" style="top:961px">                     <span class="w">:</span><span class="pb">~/projects/understanding-docker-image-signing</span><span class="w">$ </span><span class="w">kubectl get pods -n demo</span></div>
<div class="gbox" style="top:960px"></div>
<div class="dot" style="top:964px"></div>
<div class="tl" style="top:978px"><span class="w">NAME          READY   STATUS    RESTARTS   AGE</span></div>
<div class="tl" style="top:995px"><span class="w">test-signed   1/1     Running   0          13m</span></div>
<div class="tl" style="top:1012px">                     <span class="w">:</span><span class="pb">~/projects/understanding-docker-image-signing</span><span class="w">$ </span></div>
<div class="gbox" style="top:1013px;height:17px"></div>
<svg style="position:absolute;left:8px;top:1011px" width="15" height="15" viewBox="0 0 15 15"><path d="M5 1.5 L6.6 4.4 L9.5 6 L6.6 7.6 L5 10.5 L3.4 7.6 L0.5 6 L3.4 4.4 Z" fill="none" stroke="#3c9cf0" stroke-width="1.1"/><path d="M10.5 8 L11.5 10 L13.5 11 L11.5 12 L10.5 14 L9.5 12 L7.5 11 L9.5 10 Z" fill="none" stroke="#3c9cf0" stroke-width="1"/></svg>
<div id="tborder"></div>
<div class="abs" style="left:576px;top:1011px;width:8px;height:17px;background:#cccccc"></div>
<div class="abs" style="left:0;top:1028px;width:1596px;height:1px;background:#2b2b2b"></div>
<div class="tmark" style="top:586px;height:6px"></div>
<div class="tmark" style="top:614px;height:12px"></div>
<div class="tmark" style="top:699px;height:12px"></div>
<div class="tmark" style="top:953px;height:12px"></div>
<div class="tmark" style="top:1004px;height:12px;background:#5a5a5a"></div>
<!-- arrow annotation -->
<svg class="ic" style="left:1330px;top:670px" width="100" height="40" viewBox="1330 670 100 40"><path d="M1342.2 696.6 L1371.7 680 L1373.2 688.2 L1413 682.8 L1414 689.7 L1374.8 695.4 L1375.4 704.1 Z" fill="#b8ff00"/></svg>
</body></html>
